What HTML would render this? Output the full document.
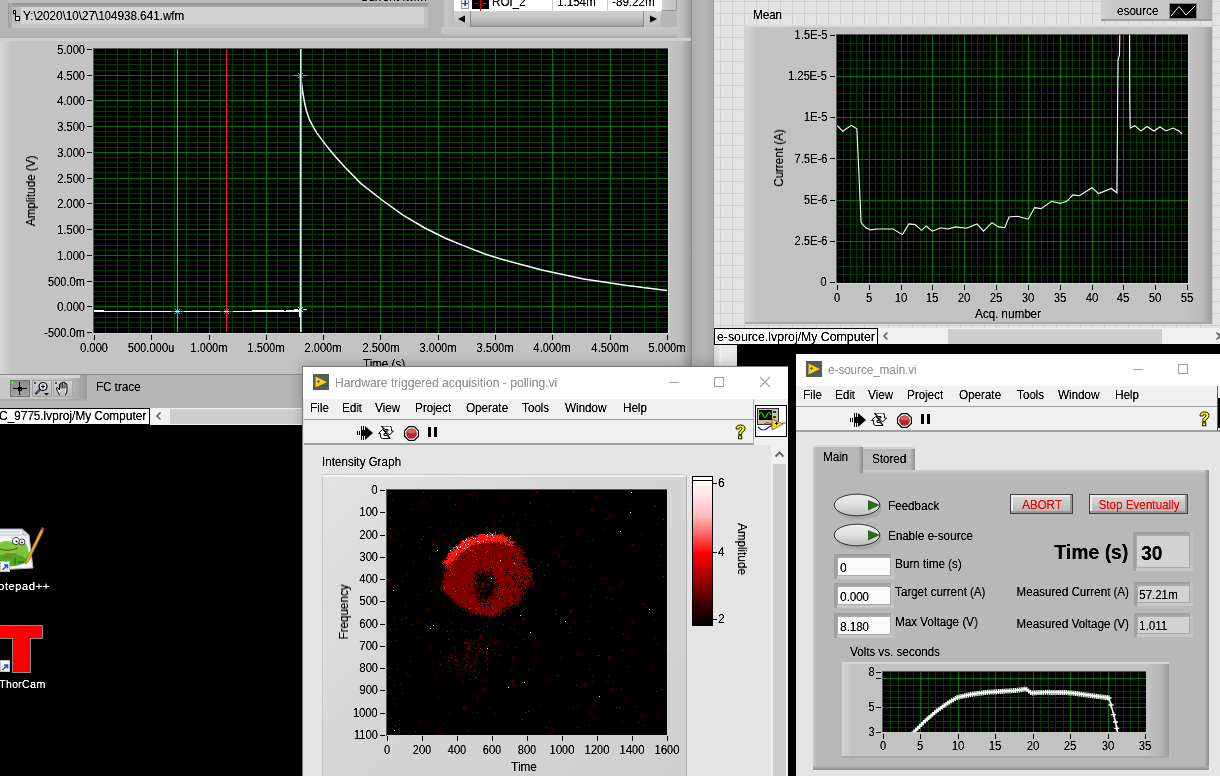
<!DOCTYPE html>
<html><head><meta charset="utf-8">
<style>
*{box-sizing:border-box;margin:0;padding:0}
html,body{width:1220px;height:776px;overflow:hidden;background:#000;font-family:"Liberation Sans",sans-serif;font-size:12px;color:#000;position:relative}
.a{position:absolute}
.t{position:absolute;white-space:nowrap;line-height:14px;height:14px;will-change:transform;filter:url(#crisp)}
svg{position:absolute;display:block}
</style></head><body>
<svg width="0" height="0" style="position:absolute;left:0;top:0"><filter id="crisp" x="-5%" y="-20%" width="110%" height="140%"><feComponentTransfer><feFuncA type="linear" slope="2.0" intercept="-0.3"/></feComponentTransfer></filter></svg>
<div class="a" style="left:0px;top:0px;width:737px;height:424px;background:#b4b4b4"></div>
<div class="a" style="left:8px;top:0px;width:420px;height:3px;background:#bcbcbc"></div>
<div class="a" style="left:360px;top:0;width:70px;height:2px;overflow:hidden">
<div class="a" style="left:0px;top:-10.5px;width:0;height:14px;"><div class="t" style="left:0;top:0;font-size:12px;color:#000;transform:scaleX(0.97);transform-origin:0 50%;">Current .wfm</div></div>
</div>
<div class="a" style="left:8px;top:3px;width:420px;height:25px;background:#b8b8b8"></div>
<div class="a" style="left:8px;top:3px;width:420px;height:4px;background:linear-gradient(#929292,#aaaaaa)"></div>
<div class="a" style="left:8px;top:3px;width:4px;height:25px;background:linear-gradient(90deg,#9c9c9c,#b0b0b0)"></div>
<div class="a" style="left:12px;top:24px;width:416px;height:4px;background:#c2c2c2"></div>
<div class="a" style="left:424px;top:7px;width:4px;height:21px;background:#c0c0c0"></div>
<div class="a" style="left:12px;top:7px;width:412px;height:17px;background:#d4d4d4"></div>
<div class="a" style="left:12px;top:7px;width:9px;height:17px;background:#bdbdbd"></div>
<svg style="left:13px;top:10px" width="7" height="11" viewBox="0 0 7 11" shape-rendering="crispEdges"><rect x="0" y="0" width="3" height="4" fill="#000"/><rect x="1" y="1" width="1" height="2" fill="#fff"/><rect x="2" y="4" width="1" height="2" fill="#000"/><rect x="2" y="6" width="5" height="5" fill="#000"/><rect x="3" y="7" width="3" height="3" fill="#fff"/></svg>
<div class="a" style="left:23px;top:9px;width:0;height:14px;"><div class="t" style="left:0;top:0;font-size:12px;color:#000;transform:scaleX(0.97);transform-origin:0 50%;">Y:\2020\10\27\104938.641.wfm</div></div>
<div class="a" style="left:441px;top:0px;width:250px;height:38px;background:#bababa"></div>
<div class="a" style="left:441px;top:0px;width:13px;height:38px;background:linear-gradient(90deg,#b0b0b0,#c6c6c6 40%,#bcbcbc)"></div>
<div class="a" style="left:441px;top:27px;width:250px;height:11px;background:linear-gradient(#c8c8c8,#c4c4c4 30%,#bdbdbd 70%,#a9a9a9)"></div>
<div class="a" style="left:677px;top:0px;width:14px;height:38px;background:linear-gradient(90deg,#c4c4c4,#b8b8b8 50%,#9f9f9f)"></div>
<div class="a" style="left:454px;top:0px;width:208px;height:11px;background:#fff"></div>
<div class="a" style="left:552px;top:0px;width:1px;height:11px;background:#c8c8c8"></div>
<div class="a" style="left:607px;top:0px;width:1px;height:11px;background:#c8c8c8"></div>
<div class="a" style="left:461px;top:0px;width:8px;height:9px;background:#f4f4f4;border:1px solid #9a9a9a;border-top:none"></div>
<div class="a" style="left:465px;top:-4px;width:0;height:14px;"><div class="t" style="left:0;top:0;font-size:11px;color:#2a4fa0;transform:translateX(-50%) scaleX(0.97);transform-origin:50% 50%;font-weight:bold">+</div></div>
<div class="a" style="left:472px;top:0px;width:17px;height:9px;background:#000"></div>
<svg style="left:472px;top:0px" width="17" height="11" viewBox="0 0 17 11" shape-rendering="crispEdges"><rect x="8" y="0" width="1" height="11" fill="#e00"/><rect x="3" y="3" width="3" height="1" fill="#e00"/><rect x="11" y="3" width="3" height="1" fill="#e00"/><rect x="6" y="1" width="1" height="1" fill="#e00"/><rect x="10" y="1" width="1" height="1" fill="#e00"/><rect x="6" y="5" width="1" height="1" fill="#e00"/><rect x="10" y="5" width="1" height="1" fill="#e00"/></svg>
<div class="a" style="left:492px;top:-5px;width:0;height:14px;"><div class="t" style="left:0;top:0;font-size:12px;color:#000;transform:scaleX(0.97);transform-origin:0 50%;">ROI_2</div></div>
<div class="a" style="left:557px;top:-5px;width:0;height:14px;"><div class="t" style="left:0;top:0;font-size:12px;color:#000;transform:scaleX(0.97);transform-origin:0 50%;">1.154m</div></div>
<div class="a" style="left:612px;top:-5px;width:0;height:14px;"><div class="t" style="left:0;top:0;font-size:12px;color:#000;transform:scaleX(0.97);transform-origin:0 50%;">-89.22m</div></div>
<div class="a" style="left:662px;top:0px;width:15px;height:11px;background:linear-gradient(90deg,#d0d0d0,#c2c2c2);border-right:1px solid #999;border-bottom:1px solid #999"></div>
<div class="a" style="left:454px;top:11px;width:223px;height:16px;background:#b9b9b9"></div>
<div class="a" style="left:454px;top:11px;width:17px;height:16px;background:linear-gradient(#d2d2d2,#bdbdbd);border-right:1px solid #888"></div>
<svg style="left:457px;top:14px" width="10" height="10" viewBox="0 0 10 10"><path d="M1 5 L8 1.5 L8 8.5 Z" fill="#000"/></svg>
<div class="a" style="left:471px;top:11px;width:172px;height:16px;background:linear-gradient(#cfcfcf,#c8c8c8 30%,#a9a9a9 85%,#8d8d8d)"></div>
<div class="a" style="left:643px;top:11px;width:18px;height:16px;background:linear-gradient(#d2d2d2,#bdbdbd);border-left:1px solid #888"></div>
<svg style="left:648px;top:14px" width="10" height="10" viewBox="0 0 10 10"><path d="M9 5 L2 1.5 L2 8.5 Z" fill="#000"/></svg>
<div class="a" style="left:661px;top:11px;width:16px;height:16px;background:#b6b6b6"></div>
<div class="a" style="left:0px;top:38px;width:691px;height:3px;background:#d0d0d0"></div>
<div class="a" style="left:0px;top:41px;width:691px;height:333px;background:#c3c3c3"></div>
<div class="a" style="left:0px;top:41px;width:10px;height:333px;background:linear-gradient(90deg,#d8d8d8,#cecece 60%,#c3c3c3)"></div>
<div class="a" style="left:668px;top:41px;width:23px;height:333px;background:linear-gradient(90deg,#c3c3c3,#bdbdbd 55%,#9a9a9a)"></div>
<div class="a" style="left:691px;top:0px;width:1px;height:374px;background:#8e8e8e"></div>
<div class="a" style="left:692px;top:0px;width:22px;height:366px;background:linear-gradient(90deg,#adadad,#b6b6b6 50%,#ababab)"></div>
<div class="a" style="left:713px;top:0px;width:1px;height:366px;background:#9c9c9c"></div>
<svg style="left:94px;top:49px" width="574" height="284" viewBox="0 0 574 284">
<rect width="574" height="284" fill="#000"/>
<g shape-rendering="crispEdges">
<path d="M11 0h1v284h-1zM23 0h1v284h-1zM34 0h1v284h-1zM46 0h1v284h-1zM69 0h1v284h-1zM80 0h1v284h-1zM92 0h1v284h-1zM103 0h1v284h-1zM126 0h1v284h-1zM138 0h1v284h-1zM149 0h1v284h-1zM160 0h1v284h-1zM183 0h1v284h-1zM195 0h1v284h-1zM206 0h1v284h-1zM218 0h1v284h-1zM241 0h1v284h-1zM252 0h1v284h-1zM264 0h1v284h-1zM275 0h1v284h-1zM298 0h1v284h-1zM309 0h1v284h-1zM321 0h1v284h-1zM332 0h1v284h-1zM355 0h1v284h-1zM367 0h1v284h-1zM378 0h1v284h-1zM390 0h1v284h-1zM413 0h1v284h-1zM424 0h1v284h-1zM435 0h1v284h-1zM447 0h1v284h-1zM470 0h1v284h-1zM481 0h1v284h-1zM493 0h1v284h-1zM504 0h1v284h-1zM527 0h1v284h-1zM539 0h1v284h-1zM550 0h1v284h-1zM562 0h1v284h-1zM0 5h574v1h-574zM0 10h574v1h-574zM0 15h574v1h-574zM0 21h574v1h-574zM0 31h574v1h-574zM0 36h574v1h-574zM0 41h574v1h-574zM0 46h574v1h-574zM0 57h574v1h-574zM0 62h574v1h-574zM0 67h574v1h-574zM0 72h574v1h-574zM0 82h574v1h-574zM0 87h574v1h-574zM0 93h574v1h-574zM0 98h574v1h-574zM0 108h574v1h-574zM0 113h574v1h-574zM0 118h574v1h-574zM0 123h574v1h-574zM0 134h574v1h-574zM0 139h574v1h-574zM0 144h574v1h-574zM0 149h574v1h-574zM0 160h574v1h-574zM0 165h574v1h-574zM0 170h574v1h-574zM0 175h574v1h-574zM0 185h574v1h-574zM0 190h574v1h-574zM0 196h574v1h-574zM0 201h574v1h-574zM0 211h574v1h-574zM0 216h574v1h-574zM0 221h574v1h-574zM0 226h574v1h-574zM0 237h574v1h-574zM0 242h574v1h-574zM0 247h574v1h-574zM0 252h574v1h-574zM0 262h574v1h-574zM0 268h574v1h-574zM0 273h574v1h-574zM0 278h574v1h-574z" fill="#003c00"/>
<path d="M57 0h1v284h-1zM115 0h1v284h-1zM172 0h1v284h-1zM229 0h1v284h-1zM286 0h1v284h-1zM344 0h1v284h-1zM401 0h1v284h-1zM458 0h1v284h-1zM516 0h1v284h-1zM0 26h574v1h-574zM0 51h574v1h-574zM0 77h574v1h-574zM0 103h574v1h-574zM0 129h574v1h-574zM0 154h574v1h-574zM0 180h574v1h-574zM0 206h574v1h-574zM0 232h574v1h-574zM0 257h574v1h-574z" fill="#007400"/>
</g>
<rect x="83" y="0" width="1" height="283" fill="#2ab4e6" shape-rendering="crispEdges"/><rect x="132" y="0" width="1" height="283" fill="#ff2020" shape-rendering="crispEdges"/><g shape-rendering="crispEdges" fill="#fff"><rect x="0" y="262" width="205" height="1"/><rect x="0" y="261" width="10" height="1"/><rect x="158" y="261" width="32" height="1"/><rect x="192" y="261" width="13" height="1"/><rect x="205" y="260" width="1" height="8"/></g><polyline points="206.5,260.0 206.5,26.0 208.1,39.0 209.4,46.8 210.7,54.5 212.6,62.2 215.2,70.0 218.4,76.4 222.9,84.1 228.7,91.9 235.8,100.9 243.5,109.9 251.0,118.3 267.0,134.6 288.0,151.0 309.0,166.1 329.9,178.5 350.9,189.0 371.9,197.6 390.3,204.8 406.0,209.8 447.8,221.0 489.6,230.0 531.3,236.3 573.1,241.4" fill="none" stroke="#fff" stroke-width="1.5"/><rect x="206" y="0" width="1" height="283" fill="#c8ffff" shape-rendering="crispEdges"/><rect x="207" y="0" width="1" height="283" fill="#ff5a9a" shape-rendering="crispEdges"/><path d="M204 24h1v1h-1zM205 25h1v1h-1zM207 25h1v1h-1zM208 24h1v1h-1zM204 28h1v1h-1zM205 27h1v1h-1zM207 27h1v1h-1zM208 28h1v1h-1zM200 26h4v1h-4zM209 26h4v1h-4z" fill="#ff70b0" shape-rendering="crispEdges"/><path d="M81 260h1v1h-1zM82 261h1v1h-1zM84 261h1v1h-1zM85 260h1v1h-1zM81 264h1v1h-1zM82 263h1v1h-1zM84 263h1v1h-1zM85 264h1v1h-1zM77 262h4v1h-4zM86 262h4v1h-4z" fill="#2ab4e6" shape-rendering="crispEdges"/><path d="M130 260h1v1h-1zM131 261h1v1h-1zM133 261h1v1h-1zM134 260h1v1h-1zM130 264h1v1h-1zM131 263h1v1h-1zM133 263h1v1h-1zM134 264h1v1h-1zM126 262h4v1h-4zM135 262h4v1h-4z" fill="#ff3030" shape-rendering="crispEdges"/><path d="M204 258h1v1h-1zM205 259h1v1h-1zM207 259h1v1h-1zM208 258h1v1h-1zM204 262h1v1h-1zM205 261h1v1h-1zM207 261h1v1h-1zM208 262h1v1h-1zM200 260h4v1h-4zM209 260h4v1h-4z" fill="#c0ffff" shape-rendering="crispEdges"/>
</svg>
<div class="a" style="left:93px;top:48px;width:575px;height:1px;background:#555"></div>
<div class="a" style="left:93px;top:48px;width:1px;height:285px;background:#555"></div>
<div class="a" style="left:93px;top:333px;width:576px;height:1px;background:#d4d4d4"></div>
<div class="a" style="left:668px;top:48px;width:1px;height:286px;background:#d4d4d4"></div>
<div class="a" style="left:85px;top:43.0px;width:0;height:14px;"><div class="t" style="right:0;top:0;font-size:12px;color:#000;transform:scaleX(0.93);transform-origin:100% 50%;">5.000</div></div>
<div class="a" style="left:87px;top:49px;width:5px;height:1px;background:#000"></div>
<div class="a" style="left:85px;top:68.72727272727272px;width:0;height:14px;"><div class="t" style="right:0;top:0;font-size:12px;color:#000;transform:scaleX(0.93);transform-origin:100% 50%;">4.500</div></div>
<div class="a" style="left:87px;top:75px;width:5px;height:1px;background:#000"></div>
<div class="a" style="left:85px;top:94.45454545454545px;width:0;height:14px;"><div class="t" style="right:0;top:0;font-size:12px;color:#000;transform:scaleX(0.93);transform-origin:100% 50%;">4.000</div></div>
<div class="a" style="left:87px;top:100px;width:5px;height:1px;background:#000"></div>
<div class="a" style="left:85px;top:120.18181818181819px;width:0;height:14px;"><div class="t" style="right:0;top:0;font-size:12px;color:#000;transform:scaleX(0.93);transform-origin:100% 50%;">3.500</div></div>
<div class="a" style="left:87px;top:126px;width:5px;height:1px;background:#000"></div>
<div class="a" style="left:85px;top:145.9090909090909px;width:0;height:14px;"><div class="t" style="right:0;top:0;font-size:12px;color:#000;transform:scaleX(0.93);transform-origin:100% 50%;">3.000</div></div>
<div class="a" style="left:87px;top:152px;width:5px;height:1px;background:#000"></div>
<div class="a" style="left:85px;top:171.63636363636363px;width:0;height:14px;"><div class="t" style="right:0;top:0;font-size:12px;color:#000;transform:scaleX(0.93);transform-origin:100% 50%;">2.500</div></div>
<div class="a" style="left:87px;top:178px;width:5px;height:1px;background:#000"></div>
<div class="a" style="left:85px;top:197.36363636363637px;width:0;height:14px;"><div class="t" style="right:0;top:0;font-size:12px;color:#000;transform:scaleX(0.93);transform-origin:100% 50%;">2.000</div></div>
<div class="a" style="left:87px;top:203px;width:5px;height:1px;background:#000"></div>
<div class="a" style="left:85px;top:223.0909090909091px;width:0;height:14px;"><div class="t" style="right:0;top:0;font-size:12px;color:#000;transform:scaleX(0.93);transform-origin:100% 50%;">1.500</div></div>
<div class="a" style="left:87px;top:229px;width:5px;height:1px;background:#000"></div>
<div class="a" style="left:85px;top:248.8181818181818px;width:0;height:14px;"><div class="t" style="right:0;top:0;font-size:12px;color:#000;transform:scaleX(0.93);transform-origin:100% 50%;">1.000</div></div>
<div class="a" style="left:87px;top:255px;width:5px;height:1px;background:#000"></div>
<div class="a" style="left:85px;top:274.5454545454545px;width:0;height:14px;"><div class="t" style="right:0;top:0;font-size:12px;color:#000;transform:scaleX(0.93);transform-origin:100% 50%;">500.0m</div></div>
<div class="a" style="left:87px;top:281px;width:5px;height:1px;background:#000"></div>
<div class="a" style="left:85px;top:300.27272727272725px;width:0;height:14px;"><div class="t" style="right:0;top:0;font-size:12px;color:#000;transform:scaleX(0.93);transform-origin:100% 50%;">0.000</div></div>
<div class="a" style="left:87px;top:306px;width:5px;height:1px;background:#000"></div>
<div class="a" style="left:85px;top:326.0px;width:0;height:14px;"><div class="t" style="right:0;top:0;font-size:12px;color:#000;transform:scaleX(0.93);transform-origin:100% 50%;">-500.0m</div></div>
<div class="a" style="left:87px;top:332px;width:5px;height:1px;background:#000"></div>
<div class="a" style="left:94.0px;top:341px;width:0;height:14px;"><div class="t" style="left:0;top:0;font-size:12px;color:#000;transform:translateX(-50%) scaleX(0.93);transform-origin:50% 50%;">0.000</div></div>
<div class="a" style="left:94px;top:335px;width:1px;height:5px;background:#000"></div>
<div class="a" style="left:151.3px;top:341px;width:0;height:14px;"><div class="t" style="left:0;top:0;font-size:12px;color:#000;transform:translateX(-50%) scaleX(0.93);transform-origin:50% 50%;">500.000u</div></div>
<div class="a" style="left:151px;top:335px;width:1px;height:5px;background:#000"></div>
<div class="a" style="left:208.6px;top:341px;width:0;height:14px;"><div class="t" style="left:0;top:0;font-size:12px;color:#000;transform:translateX(-50%) scaleX(0.93);transform-origin:50% 50%;">1.000m</div></div>
<div class="a" style="left:209px;top:335px;width:1px;height:5px;background:#000"></div>
<div class="a" style="left:265.9px;top:341px;width:0;height:14px;"><div class="t" style="left:0;top:0;font-size:12px;color:#000;transform:translateX(-50%) scaleX(0.93);transform-origin:50% 50%;">1.500m</div></div>
<div class="a" style="left:266px;top:335px;width:1px;height:5px;background:#000"></div>
<div class="a" style="left:323.2px;top:341px;width:0;height:14px;"><div class="t" style="left:0;top:0;font-size:12px;color:#000;transform:translateX(-50%) scaleX(0.93);transform-origin:50% 50%;">2.000m</div></div>
<div class="a" style="left:323px;top:335px;width:1px;height:5px;background:#000"></div>
<div class="a" style="left:380.5px;top:341px;width:0;height:14px;"><div class="t" style="left:0;top:0;font-size:12px;color:#000;transform:translateX(-50%) scaleX(0.93);transform-origin:50% 50%;">2.500m</div></div>
<div class="a" style="left:380px;top:335px;width:1px;height:5px;background:#000"></div>
<div class="a" style="left:437.8px;top:341px;width:0;height:14px;"><div class="t" style="left:0;top:0;font-size:12px;color:#000;transform:translateX(-50%) scaleX(0.93);transform-origin:50% 50%;">3.000m</div></div>
<div class="a" style="left:438px;top:335px;width:1px;height:5px;background:#000"></div>
<div class="a" style="left:495.1px;top:341px;width:0;height:14px;"><div class="t" style="left:0;top:0;font-size:12px;color:#000;transform:translateX(-50%) scaleX(0.93);transform-origin:50% 50%;">3.500m</div></div>
<div class="a" style="left:495px;top:335px;width:1px;height:5px;background:#000"></div>
<div class="a" style="left:552.4px;top:341px;width:0;height:14px;"><div class="t" style="left:0;top:0;font-size:12px;color:#000;transform:translateX(-50%) scaleX(0.93);transform-origin:50% 50%;">4.000m</div></div>
<div class="a" style="left:552px;top:335px;width:1px;height:5px;background:#000"></div>
<div class="a" style="left:609.7px;top:341px;width:0;height:14px;"><div class="t" style="left:0;top:0;font-size:12px;color:#000;transform:translateX(-50%) scaleX(0.93);transform-origin:50% 50%;">4.500m</div></div>
<div class="a" style="left:610px;top:335px;width:1px;height:5px;background:#000"></div>
<div class="a" style="left:667.0px;top:341px;width:0;height:14px;"><div class="t" style="left:0;top:0;font-size:12px;color:#000;transform:translateX(-50%) scaleX(0.93);transform-origin:50% 50%;">5.000m</div></div>
<div class="a" style="left:667px;top:335px;width:1px;height:5px;background:#000"></div>
<div class="a" style="left:31px;top:184px;width:0;height:14px;"><div class="t" style="left:0;top:0;font-size:12px;color:#000;transform:translateX(-50%) rotate(-90deg) scaleX(0.97);transform-origin:50% 50%;">Amplitude (V)</div></div>
<div class="a" style="left:384px;top:357px;width:0;height:14px;"><div class="t" style="left:0;top:0;font-size:12px;color:#000;transform:translateX(-50%) scaleX(0.97);transform-origin:50% 50%;">Time (s)</div></div>
<div class="a" style="left:0px;top:374px;width:691px;height:1px;background:#8a8a8a"></div>
<div class="a" style="left:0px;top:375px;width:87px;height:26px;background:linear-gradient(90deg,#c8c8c8,#c2c2c2 75%,#9a9a9a)"></div>
<div class="a" style="left:0px;top:375px;width:80px;height:3px;background:#d2d2d2"></div>
<div class="a" style="left:0px;top:399px;width:87px;height:2px;background:#a8a8a8"></div>
<div class="a" style="left:10px;top:380px;width:20px;height:17px;background:linear-gradient(#8a8a8a,#a4a4a4);border:1px solid #707070"></div>
<svg style="left:10px;top:380px" width="20" height="17" viewBox="0 0 20 17" shape-rendering="crispEdges"><rect x="9" y="2" width="1" height="13" fill="#000"/><rect x="3" y="8" width="14" height="1" fill="#000"/><rect x="8" y="7" width="3" height="3" fill="none" stroke="#000" stroke-width="1"/><rect x="2" y="1" width="1" height="3" fill="#3f3"/><rect x="1" y="2" width="3" height="1" fill="#3f3"/></svg>
<div class="a" style="left:32px;top:380px;width:20px;height:17px;background:linear-gradient(#d0d0d0,#b8b8b8);border:1px solid #a0a0a0"></div>
<svg style="left:32px;top:380px" width="20" height="17" viewBox="0 0 20 17"><circle cx="11" cy="6.5" r="4" fill="#e8e8ff" stroke="#000" stroke-width="1.2"/><path d="M9 6.5h4M11 4.5v4" stroke="#000" stroke-width="1.2"/><path d="M8 9.5 L3.5 14" stroke="#000" stroke-width="2.2"/><path d="M7.5 10 L4 13.5" stroke="#ddd" stroke-width="0.8"/><path d="M12 13h5l-2.5 2.5z" fill="#000"/><rect x="2" y="2" width="2" height="2" fill="#3a6a3a"/></svg>
<div class="a" style="left:53px;top:380px;width:20px;height:17px;background:linear-gradient(#d0d0d0,#bcbcbc);border:1px solid #a8a8a8"></div>
<svg style="left:53px;top:380px" width="20" height="17" viewBox="0 0 20 17"><path d="M6.5 15 Q4 11 3.5 8.5 Q3.5 7 5 8 L6.5 10 L6.5 4 Q7 3 8 4 L8 8 M8 3.5 Q8.5 2 9.5 2.5 L10 8 M10 2.5 Q11 1.5 12 2.5 L12 8 M12 3.5 Q13 3 13.8 4 L14 9 Q14.5 12 12.5 15" fill="#f4f4f4" stroke="#000" stroke-width="1" stroke-linecap="round"/><rect x="2" y="2" width="2" height="2" fill="#3a6a3a"/></svg>
<div class="a" style="left:96px;top:380px;width:0;height:14px;"><div class="t" style="left:0;top:0;font-size:12px;color:#000;transform:scaleX(0.97);transform-origin:0 50%;">FC trace</div></div>
<div class="a" style="left:0px;top:408px;width:303px;height:17px;background:#f0f0f0"></div>
<div class="a" style="left:170px;top:409px;width:133px;height:15px;background:#cdcdcd"></div>
<div class="a" style="left:-2px;top:408px;width:152px;height:17px;background:#fff;border:1px solid #000"></div>
<div class="a" style="left:-1px;top:409px;width:0;height:14px;"><div class="t" style="left:0;top:0;font-size:12px;color:#000;transform:scaleX(0.985);transform-origin:0 50%;">C_9775.lvproj/My Computer</div></div>
<svg style="left:154px;top:411px" width="10" height="10" viewBox="0 0 10 10"><path d="M6.5 1.5 L3 5 L6.5 8.5" fill="none" stroke="#606060" stroke-width="1.6"/></svg>
<div class="a" style="left:714px;top:0px;width:506px;height:328px;background-color:#e3e3e3;background-image:linear-gradient(90deg,#cfcfcf 1px,transparent 1px),linear-gradient(#cfcfcf 1px,transparent 1px);background-size:12px 12px;background-position:6px 1px"></div>
<div class="a" style="left:714px;top:344px;width:23px;height:22px;background:linear-gradient(90deg,#d8d8d8,#ececec 30%,#e6e6e6)"></div>
<div class="a" style="left:720px;top:344px;width:1px;height:22px;background:#f4f4f4"></div>
<div class="a" style="left:753px;top:8px;width:0;height:14px;"><div class="t" style="left:0;top:0;font-size:12px;color:#000;transform:scaleX(0.97);transform-origin:0 50%;">Mean</div></div>
<div class="a" style="left:1101px;top:0px;width:111px;height:21px;background:linear-gradient(90deg,#cfcfcf,#c6c6c6 15%,#c4c4c4 80%,#a8a8a8)"></div>
<div class="a" style="left:1101px;top:19px;width:111px;height:2px;background:#a0a0a0"></div>
<div class="a" style="left:1113px;top:0px;width:56px;height:19px;background:#c8c8c8"></div>
<div class="a" style="left:1117px;top:4px;width:0;height:14px;"><div class="t" style="left:0;top:0;font-size:12px;color:#000;transform:scaleX(0.97);transform-origin:0 50%;">esource</div></div>
<div class="a" style="left:1169px;top:3px;width:28px;height:16px;background:#000;border:1px solid #888"></div>
<svg style="left:1169px;top:3px" width="28" height="16" viewBox="0 0 28 16"><polyline points="2,13 10,3.5 17,12 26,3" fill="none" stroke="#fff" stroke-width="1"/></svg>
<div class="a" style="left:745px;top:25px;width:467px;height:299px;background:#c2c2c2"></div>
<div class="a" style="left:745px;top:25px;width:467px;height:2px;background:#d8d8d8"></div>
<div class="a" style="left:745px;top:27px;width:12px;height:297px;background:linear-gradient(90deg,#d2d2d2,#cbcbcb 50%,#c2c2c2)"></div>
<div class="a" style="left:1188px;top:27px;width:24px;height:297px;background:linear-gradient(90deg,#c2c2c2,#bababa 60%,#9c9c9c)"></div>
<div class="a" style="left:745px;top:322px;width:467px;height:2px;background:#a6a6a6"></div>
<svg style="left:837px;top:35px" width="351" height="248" viewBox="0 0 351 248">
<rect width="351" height="248" fill="#000"/>
<g shape-rendering="crispEdges">
<path d="M6 0h1v248h-1zM13 0h1v248h-1zM19 0h1v248h-1zM25 0h1v248h-1zM38 0h1v248h-1zM45 0h1v248h-1zM51 0h1v248h-1zM57 0h1v248h-1zM70 0h1v248h-1zM76 0h1v248h-1zM83 0h1v248h-1zM89 0h1v248h-1zM102 0h1v248h-1zM108 0h1v248h-1zM115 0h1v248h-1zM121 0h1v248h-1zM134 0h1v248h-1zM140 0h1v248h-1zM146 0h1v248h-1zM153 0h1v248h-1zM165 0h1v248h-1zM172 0h1v248h-1zM178 0h1v248h-1zM185 0h1v248h-1zM197 0h1v248h-1zM204 0h1v248h-1zM210 0h1v248h-1zM216 0h1v248h-1zM229 0h1v248h-1zM235 0h1v248h-1zM242 0h1v248h-1zM248 0h1v248h-1zM261 0h1v248h-1zM267 0h1v248h-1zM274 0h1v248h-1zM280 0h1v248h-1zM293 0h1v248h-1zM299 0h1v248h-1zM305 0h1v248h-1zM312 0h1v248h-1zM325 0h1v248h-1zM331 0h1v248h-1zM337 0h1v248h-1zM344 0h1v248h-1zM0 8h351v1h-351zM0 16h351v1h-351zM0 25h351v1h-351zM0 33h351v1h-351zM0 49h351v1h-351zM0 58h351v1h-351zM0 66h351v1h-351zM0 74h351v1h-351zM0 91h351v1h-351zM0 99h351v1h-351zM0 107h351v1h-351zM0 115h351v1h-351zM0 132h351v1h-351zM0 140h351v1h-351zM0 148h351v1h-351zM0 156h351v1h-351zM0 173h351v1h-351zM0 181h351v1h-351zM0 189h351v1h-351zM0 198h351v1h-351zM0 214h351v1h-351zM0 222h351v1h-351zM0 231h351v1h-351zM0 239h351v1h-351z" fill="#003c00"/>
<path d="M32 0h1v248h-1zM64 0h1v248h-1zM95 0h1v248h-1zM127 0h1v248h-1zM159 0h1v248h-1zM191 0h1v248h-1zM223 0h1v248h-1zM255 0h1v248h-1zM286 0h1v248h-1zM318 0h1v248h-1zM0 41h351v1h-351zM0 82h351v1h-351zM0 124h351v1h-351zM0 165h351v1h-351zM0 206h351v1h-351z" fill="#007400"/>
</g>
<polyline points="0.3,90.7 5.8,96.3 14.3,90.3 19.9,93.7 24.1,187.6 29.0,193.0 33.5,194.9 40.0,194.0 48.0,194.0 56.0,194.0 65.5,199.6 71.9,188.9 78.0,189.5 84.7,195.3 89.0,191.0 95.3,196.2 103.8,192.7 111.0,194.0 118.8,191.9 129.4,193.2 140.0,188.9 146.5,196.2 155.0,187.6 161.4,191.9 167.8,192.7 172.0,182.0 180.6,181.2 191.2,184.2 197.6,172.7 204.0,173.6 214.7,166.3 223.2,168.4 229.6,166.3 236.0,159.9 242.4,160.8 255.0,152.7 261.6,158.6 274.3,153.5 279.9,157.8 281.0,25.0 282.5,20.0 283.0,-15.0 292.5,-15.0 292.7,61.0 293.2,93.0 297.8,90.7 304.0,96.0 310.0,91.5 317.0,96.0 323.0,92.0 329.0,96.0 336.0,93.0 342.0,96.0 345.0,99.0" fill="none" stroke="#fff" stroke-width="1.1"/>
</svg>
<div class="a" style="left:836px;top:34px;width:353px;height:1px;background:#555"></div>
<div class="a" style="left:836px;top:34px;width:1px;height:249px;background:#555"></div>
<div class="a" style="left:836px;top:283px;width:353px;height:1px;background:#d4d4d4"></div>
<div class="a" style="left:1188px;top:34px;width:1px;height:250px;background:#d4d4d4"></div>
<div class="a" style="left:827px;top:28.0px;width:0;height:14px;"><div class="t" style="right:0;top:0;font-size:12px;color:#000;transform:scaleX(0.93);transform-origin:100% 50%;">1.5E-5</div></div>
<div class="a" style="left:830px;top:35px;width:5px;height:1px;background:#000"></div>
<div class="a" style="left:827px;top:69.16666666666666px;width:0;height:14px;"><div class="t" style="right:0;top:0;font-size:12px;color:#000;transform:scaleX(0.93);transform-origin:100% 50%;">1.25E-5</div></div>
<div class="a" style="left:830px;top:76px;width:5px;height:1px;background:#000"></div>
<div class="a" style="left:827px;top:110.33333333333333px;width:0;height:14px;"><div class="t" style="right:0;top:0;font-size:12px;color:#000;transform:scaleX(0.93);transform-origin:100% 50%;">1E-5</div></div>
<div class="a" style="left:830px;top:117px;width:5px;height:1px;background:#000"></div>
<div class="a" style="left:827px;top:151.5px;width:0;height:14px;"><div class="t" style="right:0;top:0;font-size:12px;color:#000;transform:scaleX(0.93);transform-origin:100% 50%;">7.5E-6</div></div>
<div class="a" style="left:830px;top:158px;width:5px;height:1px;background:#000"></div>
<div class="a" style="left:827px;top:192.66666666666666px;width:0;height:14px;"><div class="t" style="right:0;top:0;font-size:12px;color:#000;transform:scaleX(0.93);transform-origin:100% 50%;">5E-6</div></div>
<div class="a" style="left:830px;top:200px;width:5px;height:1px;background:#000"></div>
<div class="a" style="left:827px;top:233.83333333333334px;width:0;height:14px;"><div class="t" style="right:0;top:0;font-size:12px;color:#000;transform:scaleX(0.93);transform-origin:100% 50%;">2.5E-6</div></div>
<div class="a" style="left:830px;top:241px;width:5px;height:1px;background:#000"></div>
<div class="a" style="left:827px;top:275.0px;width:0;height:14px;"><div class="t" style="right:0;top:0;font-size:12px;color:#000;transform:scaleX(0.93);transform-origin:100% 50%;">0</div></div>
<div class="a" style="left:830px;top:282px;width:5px;height:1px;background:#000"></div>
<div class="a" style="left:837.0px;top:291px;width:0;height:14px;"><div class="t" style="left:0;top:0;font-size:12px;color:#000;transform:translateX(-50%) scaleX(0.93);transform-origin:50% 50%;">0</div></div>
<div class="a" style="left:837px;top:285px;width:1px;height:5px;background:#000"></div>
<div class="a" style="left:868.8181818181819px;top:291px;width:0;height:14px;"><div class="t" style="left:0;top:0;font-size:12px;color:#000;transform:translateX(-50%) scaleX(0.93);transform-origin:50% 50%;">5</div></div>
<div class="a" style="left:869px;top:285px;width:1px;height:5px;background:#000"></div>
<div class="a" style="left:900.6363636363636px;top:291px;width:0;height:14px;"><div class="t" style="left:0;top:0;font-size:12px;color:#000;transform:translateX(-50%) scaleX(0.93);transform-origin:50% 50%;">10</div></div>
<div class="a" style="left:901px;top:285px;width:1px;height:5px;background:#000"></div>
<div class="a" style="left:932.4545454545455px;top:291px;width:0;height:14px;"><div class="t" style="left:0;top:0;font-size:12px;color:#000;transform:translateX(-50%) scaleX(0.93);transform-origin:50% 50%;">15</div></div>
<div class="a" style="left:932px;top:285px;width:1px;height:5px;background:#000"></div>
<div class="a" style="left:964.2727272727273px;top:291px;width:0;height:14px;"><div class="t" style="left:0;top:0;font-size:12px;color:#000;transform:translateX(-50%) scaleX(0.93);transform-origin:50% 50%;">20</div></div>
<div class="a" style="left:964px;top:285px;width:1px;height:5px;background:#000"></div>
<div class="a" style="left:996.0909090909091px;top:291px;width:0;height:14px;"><div class="t" style="left:0;top:0;font-size:12px;color:#000;transform:translateX(-50%) scaleX(0.93);transform-origin:50% 50%;">25</div></div>
<div class="a" style="left:996px;top:285px;width:1px;height:5px;background:#000"></div>
<div class="a" style="left:1027.909090909091px;top:291px;width:0;height:14px;"><div class="t" style="left:0;top:0;font-size:12px;color:#000;transform:translateX(-50%) scaleX(0.93);transform-origin:50% 50%;">30</div></div>
<div class="a" style="left:1028px;top:285px;width:1px;height:5px;background:#000"></div>
<div class="a" style="left:1059.7272727272727px;top:291px;width:0;height:14px;"><div class="t" style="left:0;top:0;font-size:12px;color:#000;transform:translateX(-50%) scaleX(0.93);transform-origin:50% 50%;">35</div></div>
<div class="a" style="left:1060px;top:285px;width:1px;height:5px;background:#000"></div>
<div class="a" style="left:1091.5454545454545px;top:291px;width:0;height:14px;"><div class="t" style="left:0;top:0;font-size:12px;color:#000;transform:translateX(-50%) scaleX(0.93);transform-origin:50% 50%;">40</div></div>
<div class="a" style="left:1092px;top:285px;width:1px;height:5px;background:#000"></div>
<div class="a" style="left:1123.3636363636365px;top:291px;width:0;height:14px;"><div class="t" style="left:0;top:0;font-size:12px;color:#000;transform:translateX(-50%) scaleX(0.93);transform-origin:50% 50%;">45</div></div>
<div class="a" style="left:1123px;top:285px;width:1px;height:5px;background:#000"></div>
<div class="a" style="left:1155.1818181818182px;top:291px;width:0;height:14px;"><div class="t" style="left:0;top:0;font-size:12px;color:#000;transform:translateX(-50%) scaleX(0.93);transform-origin:50% 50%;">50</div></div>
<div class="a" style="left:1155px;top:285px;width:1px;height:5px;background:#000"></div>
<div class="a" style="left:1187.0px;top:291px;width:0;height:14px;"><div class="t" style="left:0;top:0;font-size:12px;color:#000;transform:translateX(-50%) scaleX(0.93);transform-origin:50% 50%;">55</div></div>
<div class="a" style="left:1187px;top:285px;width:1px;height:5px;background:#000"></div>
<div class="a" style="left:1008px;top:307px;width:0;height:14px;"><div class="t" style="left:0;top:0;font-size:12px;color:#000;transform:translateX(-50%) scaleX(0.97);transform-origin:50% 50%;">Acq. number</div></div>
<div class="a" style="left:779px;top:151px;width:0;height:14px;"><div class="t" style="left:0;top:0;font-size:12px;color:#000;transform:translateX(-50%) rotate(-90deg) scaleX(0.97);transform-origin:50% 50%;">Current (A)</div></div>
<div class="a" style="left:714px;top:328px;width:506px;height:16px;background:#f0f0f0"></div>
<div class="a" style="left:948px;top:329px;width:214px;height:15px;background:#cdcdcd"></div>
<div class="a" style="left:714px;top:328px;width:164px;height:17px;background:#fff;border:1px solid #000"></div>
<div class="a" style="left:717px;top:330px;width:0;height:14px;"><div class="t" style="left:0;top:0;font-size:12.3px;color:#000;transform:scaleX(1.0);transform-origin:0 50%;">e-source.lvproj/My Computer</div></div>
<svg style="left:881px;top:331px" width="10" height="10" viewBox="0 0 10 10"><path d="M6.5 1.5 L3 5 L6.5 8.5" fill="none" stroke="#606060" stroke-width="1.6"/></svg>
<svg style="left:1213px;top:331px" width="10" height="10" viewBox="0 0 10 10"><path d="M3.5 1.5 L7 5 L3.5 8.5" fill="none" stroke="#606060" stroke-width="1.6"/></svg>
<svg style="left:0px;top:526px" width="46" height="48" viewBox="0 0 46 48"><path d="M-4 3 L22 3 L29 9 L33 42 L-4 44 Z" fill="#f4f4f8" stroke="#a8a8b8" stroke-width="1"/><path d="M22 3 L23 9 L29 9" fill="#d8d8e0" stroke="#a8a8b8" stroke-width="0.8"/><path d="M-4 6h24M-4 9h26" stroke="#a0b0d8" stroke-width="0.8"/><path d="M-4 20 Q2 13 12 16 Q20 12 26 18 Q31 26 27 34 Q20 41 8 40 L-4 40 Z" fill="#78c83c"/><path d="M-4 30 Q10 26 22 30 Q27 33 27 36 Q18 41 6 40 L-4 40 Z" fill="#4ea822"/><circle cx="16" cy="15" r="3.6" fill="#fff" stroke="#303030" stroke-width="0.9"/><circle cx="22" cy="16" r="3" fill="#fff" stroke="#303030" stroke-width="0.9"/><circle cx="16.5" cy="15.5" r="1" fill="#000"/><circle cx="22" cy="16.5" r="0.9" fill="#000"/><path d="M0 23 Q8 26 18 22" stroke="#7a3b1b" stroke-width="1" fill="none"/><path d="M5 28h12M3 31h8" stroke="#a05020" stroke-width="0.8"/><path d="M15 38 L15 32 M18 36h6" stroke="#1b4d1b" stroke-width="0.9"/><path d="M41 3 L26 34 L25.5 38 L28.5 35.5 L43.5 5 Z" fill="#f0a828" stroke="#6a4810" stroke-width="0.6"/><path d="M40.5 3.5 L42 1 L44.5 2.5 L43.5 5 Z" fill="#c04040"/></svg>
<svg style="left:0px;top:561px" width="10" height="11" viewBox="0 0 10 11"><rect width="10" height="11" fill="#fff"/><rect x="0.5" y="0.5" width="9" height="10" fill="none" stroke="#c0c0c0"/><path d="M2.5 9 L7 4.5 M4 4h3.5v3.5" stroke="#1c5bb8" stroke-width="1.7" fill="none"/></svg>
<div class="a" style="left:-2px;top:579px;width:0;height:14px;"><div class="t" style="left:0;top:0;font-size:11.5px;color:#fff;transform:scaleX(0.97);transform-origin:0 50%;letter-spacing:0.6px">otepad++</div></div>
<svg style="left:0px;top:624px" width="46" height="50" viewBox="0 0 46 50" shape-rendering="crispEdges"><path d="M-2 1.5 H42.5 V14.5 H30.5 V48.5 H12.5 V14.5 H-2 Z" fill="#ff0000" stroke="#8a8a8a" stroke-width="1"/></svg>
<svg style="left:0px;top:660px" width="10" height="12" viewBox="0 0 10 12"><rect width="10" height="12" fill="#fff"/><rect x="0.5" y="0.5" width="9" height="11" fill="none" stroke="#c0c0c0"/><path d="M2.5 10 L7 5.5 M4 5h3.5v3.5" stroke="#1c5bb8" stroke-width="1.7" fill="none"/></svg>
<div class="a" style="left:-1px;top:677px;width:0;height:14px;"><div class="t" style="left:0;top:0;font-size:11px;color:#fff;transform:scaleX(0.97);transform-origin:0 50%;letter-spacing:0.3px">ThorCam</div></div>
<div class="a" style="left:303px;top:366px;width:485px;height:410px;background:#e4e4e4;box-shadow:0 0 11px 2px rgba(0,0,0,0.22)"></div>
<div class="a" style="left:303px;top:366px;width:485px;height:33px;background:#fff"></div>
<div class="a" style="left:302px;top:366px;width:1px;height:410px;background:#7a7a7a"></div>
<div class="a" style="left:302px;top:366px;width:486px;height:1px;background:#7a7a7a"></div>
<svg style="left:313px;top:374px" width="16" height="16" viewBox="0 0 16 16" shape-rendering="crispEdges"><rect width="16" height="16" fill="#555a60"/><path d="M2.5 2.5 L14 8 L2.5 13.5 Z" fill="#fcd100" shape-rendering="geometricPrecision"/><rect x="4" y="7" width="3" height="1" fill="#5a6478"/><rect x="5" y="6" width="1" height="3" fill="#5a6478"/></svg>
<div class="a" style="left:335px;top:376px;width:0;height:14px;"><div class="t" style="left:0;top:0;font-size:12px;color:#9a9a9a;transform:scaleX(1.01);transform-origin:0 50%;">Hardware triggered acquisition - polling.vi</div></div>
<div class="a" style="left:669px;top:382px;width:10px;height:1px;background:#a0a0a0"></div>
<div class="a" style="left:714px;top:377px;width:10px;height:10px;border:1px solid #a0a0a0"></div>
<svg style="left:759px;top:376px" width="12" height="12" viewBox="0 0 12 12"><path d="M1 1 L11 11 M11 1 L1 11" stroke="#a0a0a0" stroke-width="1.1"/></svg>
<div class="a" style="left:304px;top:399px;width:484px;height:20px;background:#f0f0f0"></div>
<div class="a" style="left:310px;top:401px;width:0;height:14px;"><div class="t" style="left:0;top:0;font-size:12px;color:#000;transform:scaleX(0.97);transform-origin:0 50%;">File</div></div>
<div class="a" style="left:342px;top:401px;width:0;height:14px;"><div class="t" style="left:0;top:0;font-size:12px;color:#000;transform:scaleX(0.97);transform-origin:0 50%;">Edit</div></div>
<div class="a" style="left:375px;top:401px;width:0;height:14px;"><div class="t" style="left:0;top:0;font-size:12px;color:#000;transform:scaleX(0.97);transform-origin:0 50%;">View</div></div>
<div class="a" style="left:415px;top:401px;width:0;height:14px;"><div class="t" style="left:0;top:0;font-size:12px;color:#000;transform:scaleX(0.97);transform-origin:0 50%;">Project</div></div>
<div class="a" style="left:466px;top:401px;width:0;height:14px;"><div class="t" style="left:0;top:0;font-size:12px;color:#000;transform:scaleX(0.97);transform-origin:0 50%;">Operate</div></div>
<div class="a" style="left:522px;top:401px;width:0;height:14px;"><div class="t" style="left:0;top:0;font-size:12px;color:#000;transform:scaleX(0.97);transform-origin:0 50%;">Tools</div></div>
<div class="a" style="left:565px;top:401px;width:0;height:14px;"><div class="t" style="left:0;top:0;font-size:12px;color:#000;transform:scaleX(0.97);transform-origin:0 50%;">Window</div></div>
<div class="a" style="left:623px;top:401px;width:0;height:14px;"><div class="t" style="left:0;top:0;font-size:12px;color:#000;transform:scaleX(0.97);transform-origin:0 50%;">Help</div></div>
<div class="a" style="left:304px;top:419px;width:484px;height:1px;background:#a0a0a0"></div>
<div class="a" style="left:304px;top:420px;width:484px;height:24px;background:#f0f0f0"></div>
<div class="a" style="left:304px;top:443px;width:484px;height:2px;background:#a0a0a0"></div>
<svg style="left:357px;top:426px" width="84" height="15" viewBox="0 0 84 15"><g shape-rendering="crispEdges" fill="#000"><rect x="0" y="5" width="1" height="4"/><rect x="2" y="5" width="1" height="4"/><rect x="4" y="0" width="1" height="4"/><rect x="6" y="0" width="1" height="4"/><rect x="4" y="10" width="1" height="4"/><rect x="6" y="10" width="1" height="4"/><rect x="4" y="4" width="5" height="6"/></g><path d="M8 0 L16 7 L8 14 Z" fill="#000"/><g transform="translate(17,-3)" stroke="#000" stroke-width="1" fill="#fff" stroke-linejoin="miter"><path d="M7.5 3 H15.5 Q17.5 3 17.5 5.5 V8 H19.5 L15.5 12 L11.5 8 H14 V6.5 H11 Z"/><path d="M16 15.5 H8.5 Q6.5 15.5 6.5 13 V10.5 H4.5 L8.5 6.5 L12.5 10.5 H10 V12.5 H13 Z"/><path d="M7.5 3 L16 15.5" fill="none" stroke-width="1.1"/></g><g transform="translate(47,0)"><path d="M4.5 0 H10.5 L15 4.5 V10.5 L10.5 15 H4.5 L0 10.5 V4.5 Z" fill="#000"/><path d="M5 1.2 H10 L13.8 5 V10 L10 13.8 H5 L1.2 10 V5 Z" fill="#fff"/><circle cx="7.5" cy="7.5" r="5.3" fill="#b82525"/><ellipse cx="7.5" cy="5.3" rx="4" ry="2.4" fill="#d86060"/><rect x="2.3" y="7" width="10.4" height="1.3" fill="#c23232"/></g><g shape-rendering="crispEdges" fill="#000"><rect x="71" y="1" width="3" height="10"/><rect x="77" y="1" width="3" height="10"/></g></svg>
<svg style="left:734px;top:424px" width="13" height="16" viewBox="0 0 13 16"><path d="M2 5 Q2 1 6.5 1 Q11 1 11 4.5 Q11 7 8 8.5 L7.5 10.5 H4.8 L5 7.5 Q8 6.2 8 4.6 Q8 3.3 6.5 3.3 Q5 3.3 5 5 Z" fill="#ffff00" stroke="#000" stroke-width="0.9"/><rect x="4.6" y="11.8" width="3.2" height="3" fill="#ffff00" stroke="#000" stroke-width="0.9"/></svg>
<div class="a" style="left:753px;top:399px;width:1px;height:46px;background:#b4b4b4"></div>
<div class="a" style="left:754px;top:399px;width:34px;height:46px;background:#f0f0f0"></div>
<svg style="left:755px;top:405px" width="32" height="32" viewBox="0 0 32 32" shape-rendering="crispEdges"><rect x="0.5" y="0.5" width="31" height="31" fill="#fff" stroke="#000"/><rect x="2" y="3" width="21" height="16" fill="#c8c0a0" stroke="#333" stroke-width="1"/><rect x="4" y="5" width="13" height="10" fill="#000"/><path d="M4 10 Q6 5 8 10 T12 10 T16 10" fill="none" stroke="#2ed02e" stroke-width="1.2" shape-rendering="geometricPrecision"/><rect x="18" y="6" width="3" height="2" fill="#333"/><rect x="18" y="11" width="3" height="2" fill="#333"/><path d="M3 22 Q8 28 14 22 L18 20" fill="none" stroke="#1030c0" stroke-width="1.2" shape-rendering="geometricPrecision"/><path d="M8 20 Q12 16 16 19 L31 18" fill="none" stroke="#e02020" stroke-width="1" shape-rendering="geometricPrecision"/><path d="M17 14 L28 19 L17 25 Z" fill="#ffe000" stroke="#555" stroke-width="0.8" shape-rendering="geometricPrecision"/><rect x="20" y="18" width="3" height="1" fill="#000"/><rect x="21" y="17" width="1" height="3" fill="#000"/></svg>
<div class="a" style="left:771px;top:445px;width:17px;height:331px;background:#f0f0f0"></div>
<div class="a" style="left:773px;top:464px;width:13px;height:312px;background:#cdcdcd"></div>
<svg style="left:774px;top:450px" width="11" height="8" viewBox="0 0 11 8"><path d="M1.5 6.5 L5.5 2.5 L9.5 6.5" fill="none" stroke="#606060" stroke-width="1.8"/></svg>
<div class="a" style="left:322px;top:455px;width:0;height:14px;"><div class="t" style="left:0;top:0;font-size:12px;color:#000;transform:scaleX(0.97);transform-origin:0 50%;">Intensity Graph</div></div>
<div class="a" style="left:322px;top:474px;width:365px;height:310px;background:linear-gradient(135deg,#e2e2e2,#d6d6d6 40%,#cfcfcf);border:1px solid #b0b0b0;border-top-color:#c8c8c8;border-left-color:#c8c8c8;border-radius:4px"></div>
<div class="a" style="left:323px;top:475px;width:363px;height:2px;background:#f0f0f0;border-radius:3px 3px 0 0"></div>
<svg style="left:387px;top:490px" width="280" height="245" viewBox="0 0 280 245" shape-rendering="crispEdges"><rect width="280" height="245" fill="#000"/><path d="M101 44h1v1h-1zM106 44h1v1h-1zM112 44h1v1h-1zM115 45h1v1h-1zM83 46h1v1h-1zM89 46h1v1h-1zM104 46h1v1h-1zM111 46h1v1h-1zM116 46h1v1h-1zM83 47h1v1h-1zM101 47h1v1h-1zM108 47h1v1h-1zM118 47h1v1h-1zM78 48h1v1h-1zM82 48h4v1h-4zM101 48h1v1h-1zM122 48h1v1h-1zM78 49h1v1h-1zM80 49h1v1h-1zM85 49h2v1h-2zM89 49h2v1h-2zM93 49h1v1h-1zM110 49h1v1h-1zM115 49h1v1h-1zM120 49h1v1h-1zM125 49h1v1h-1zM89 50h1v1h-1zM100 50h1v1h-1zM113 50h1v1h-1zM74 51h1v1h-1zM97 51h3v1h-3zM101 51h1v1h-1zM103 51h3v1h-3zM110 51h1v1h-1zM114 51h1v1h-1zM116 51h1v1h-1zM119 51h2v1h-2zM122 51h1v1h-1zM80 52h1v1h-1zM83 52h1v1h-1zM94 52h2v1h-2zM97 52h1v1h-1zM100 52h1v1h-1zM102 52h3v1h-3zM106 52h3v1h-3zM112 52h1v1h-1zM115 52h2v1h-2zM119 52h3v1h-3zM124 52h1v1h-1zM127 52h1v1h-1zM73 53h1v1h-1zM78 53h1v1h-1zM83 53h1v1h-1zM87 53h3v1h-3zM94 53h12v1h-12zM107 53h6v1h-6zM114 53h2v1h-2zM117 53h2v1h-2zM121 53h2v1h-2zM124 53h1v1h-1zM126 53h3v1h-3zM130 53h1v1h-1zM69 54h1v1h-1zM77 54h1v1h-1zM88 54h2v1h-2zM91 54h16v1h-16zM108 54h10v1h-10zM119 54h1v1h-1zM123 54h1v1h-1zM125 54h1v1h-1zM128 54h1v1h-1zM68 55h1v1h-1zM81 55h1v1h-1zM84 55h7v1h-7zM92 55h23v1h-23zM116 55h5v1h-5zM123 55h1v1h-1zM128 55h3v1h-3zM132 55h1v1h-1zM68 56h1v1h-1zM83 56h7v1h-7zM91 56h39v1h-39zM133 56h1v1h-1zM65 57h1v1h-1zM82 57h14v1h-14zM97 57h18v1h-18zM116 57h12v1h-12zM129 57h1v1h-1zM131 57h2v1h-2zM73 58h1v1h-1zM80 58h53v1h-53zM66 59h1v1h-1zM73 59h1v1h-1zM77 59h1v1h-1zM79 59h53v1h-53zM133 59h2v1h-2zM136 59h1v1h-1zM76 60h1v1h-1zM78 60h1v1h-1zM80 60h5v1h-5zM86 60h33v1h-33zM120 60h16v1h-16zM66 61h1v1h-1zM77 61h3v1h-3zM81 61h7v1h-7zM89 61h11v1h-11zM101 61h18v1h-18zM120 61h15v1h-15zM62 62h2v1h-2zM74 62h5v1h-5zM80 62h18v1h-18zM99 62h29v1h-29zM129 62h4v1h-4zM134 62h4v1h-4zM68 63h1v1h-1zM70 63h1v1h-1zM72 63h16v1h-16zM89 63h4v1h-4zM94 63h32v1h-32zM127 63h7v1h-7zM136 63h1v1h-1zM73 64h32v1h-32zM106 64h29v1h-29zM63 65h1v1h-1zM70 65h1v1h-1zM72 65h13v1h-13zM86 65h50v1h-50zM137 65h1v1h-1zM69 66h1v1h-1zM71 66h6v1h-6zM79 66h7v1h-7zM87 66h13v1h-13zM101 66h11v1h-11zM113 66h5v1h-5zM119 66h8v1h-8zM128 66h8v1h-8zM59 67h1v1h-1zM61 67h1v1h-1zM65 67h1v1h-1zM68 67h2v1h-2zM71 67h4v1h-4zM76 67h49v1h-49zM126 67h4v1h-4zM131 67h3v1h-3zM135 67h3v1h-3zM68 68h1v1h-1zM70 68h5v1h-5zM76 68h26v1h-26zM103 68h16v1h-16zM120 68h5v1h-5zM126 68h14v1h-14zM67 69h1v1h-1zM70 69h19v1h-19zM90 69h15v1h-15zM106 69h21v1h-21zM128 69h1v1h-1zM130 69h6v1h-6zM58 70h1v1h-1zM67 70h7v1h-7zM75 70h38v1h-38zM114 70h17v1h-17zM132 70h3v1h-3zM136 70h1v1h-1zM138 70h2v1h-2zM57 71h1v1h-1zM63 71h1v1h-1zM66 71h21v1h-21zM88 71h25v1h-25zM114 71h2v1h-2zM117 71h8v1h-8zM126 71h1v1h-1zM128 71h1v1h-1zM130 71h10v1h-10zM63 72h30v1h-30zM94 72h32v1h-32zM127 72h2v1h-2zM130 72h4v1h-4zM136 72h3v1h-3zM57 73h1v1h-1zM61 73h1v1h-1zM64 73h12v1h-12zM77 73h27v1h-27zM105 73h22v1h-22zM128 73h8v1h-8zM139 73h2v1h-2zM58 74h2v1h-2zM62 74h2v1h-2zM65 74h17v1h-17zM83 74h5v1h-5zM89 74h43v1h-43zM133 74h4v1h-4zM139 74h1v1h-1zM58 75h1v1h-1zM60 75h34v1h-34zM95 75h36v1h-36zM132 75h1v1h-1zM134 75h4v1h-4zM140 75h1v1h-1zM57 76h1v1h-1zM61 76h1v1h-1zM63 76h33v1h-33zM97 76h3v1h-3zM101 76h30v1h-30zM133 76h6v1h-6zM140 76h1v1h-1zM57 77h6v1h-6zM64 77h8v1h-8zM74 77h13v1h-13zM88 77h10v1h-10zM100 77h4v1h-4zM107 77h16v1h-16zM124 77h1v1h-1zM129 77h3v1h-3zM133 77h2v1h-2zM137 77h1v1h-1zM55 78h1v1h-1zM58 78h36v1h-36zM95 78h3v1h-3zM99 78h3v1h-3zM104 78h6v1h-6zM111 78h3v1h-3zM115 78h11v1h-11zM127 78h3v1h-3zM132 78h12v1h-12zM58 79h1v1h-1zM60 79h19v1h-19zM80 79h1v1h-1zM82 79h14v1h-14zM97 79h24v1h-24zM122 79h6v1h-6zM129 79h3v1h-3zM133 79h2v1h-2zM136 79h6v1h-6zM144 79h1v1h-1zM56 80h1v1h-1zM58 80h1v1h-1zM60 80h3v1h-3zM64 80h14v1h-14zM79 80h2v1h-2zM82 80h9v1h-9zM92 80h3v1h-3zM97 80h6v1h-6zM104 80h14v1h-14zM120 80h4v1h-4zM125 80h2v1h-2zM128 80h14v1h-14zM58 81h22v1h-22zM81 81h3v1h-3zM85 81h7v1h-7zM93 81h2v1h-2zM98 81h1v1h-1zM101 81h2v1h-2zM105 81h2v1h-2zM108 81h25v1h-25zM134 81h2v1h-2zM137 81h1v1h-1zM139 81h1v1h-1zM141 81h1v1h-1zM56 82h33v1h-33zM90 82h5v1h-5zM98 82h1v1h-1zM100 82h1v1h-1zM102 82h2v1h-2zM105 82h14v1h-14zM122 82h8v1h-8zM131 82h4v1h-4zM136 82h2v1h-2zM139 82h4v1h-4zM144 82h1v1h-1zM57 83h1v1h-1zM59 83h6v1h-6zM66 83h22v1h-22zM89 83h1v1h-1zM92 83h1v1h-1zM95 83h1v1h-1zM98 83h1v1h-1zM103 83h1v1h-1zM105 83h1v1h-1zM108 83h20v1h-20zM129 83h1v1h-1zM131 83h3v1h-3zM135 83h1v1h-1zM137 83h3v1h-3zM142 83h4v1h-4zM57 84h1v1h-1zM59 84h8v1h-8zM68 84h18v1h-18zM88 84h1v1h-1zM90 84h2v1h-2zM94 84h1v1h-1zM97 84h1v1h-1zM99 84h1v1h-1zM101 84h2v1h-2zM104 84h1v1h-1zM106 84h1v1h-1zM108 84h11v1h-11zM120 84h7v1h-7zM129 84h1v1h-1zM131 84h3v1h-3zM135 84h3v1h-3zM139 84h1v1h-1zM141 84h4v1h-4zM57 85h3v1h-3zM61 85h1v1h-1zM63 85h2v1h-2zM66 85h24v1h-24zM93 85h1v1h-1zM99 85h1v1h-1zM108 85h5v1h-5zM115 85h8v1h-8zM124 85h4v1h-4zM131 85h1v1h-1zM133 85h3v1h-3zM138 85h4v1h-4zM143 85h3v1h-3zM57 86h8v1h-8zM66 86h10v1h-10zM77 86h11v1h-11zM90 86h1v1h-1zM107 86h18v1h-18zM127 86h3v1h-3zM131 86h2v1h-2zM135 86h1v1h-1zM137 86h2v1h-2zM140 86h5v1h-5zM57 87h29v1h-29zM87 87h1v1h-1zM89 87h3v1h-3zM102 87h2v1h-2zM105 87h1v1h-1zM107 87h11v1h-11zM119 87h6v1h-6zM126 87h5v1h-5zM133 87h1v1h-1zM136 87h1v1h-1zM138 87h3v1h-3zM142 87h3v1h-3zM54 88h1v1h-1zM56 88h31v1h-31zM89 88h1v1h-1zM100 88h1v1h-1zM106 88h1v1h-1zM108 88h1v1h-1zM110 88h8v1h-8zM119 88h8v1h-8zM131 88h2v1h-2zM134 88h3v1h-3zM138 88h1v1h-1zM140 88h1v1h-1zM144 88h1v1h-1zM55 89h1v1h-1zM58 89h1v1h-1zM60 89h2v1h-2zM63 89h20v1h-20zM84 89h5v1h-5zM98 89h1v1h-1zM106 89h1v1h-1zM108 89h1v1h-1zM111 89h11v1h-11zM123 89h2v1h-2zM127 89h10v1h-10zM139 89h4v1h-4zM144 89h2v1h-2zM56 90h30v1h-30zM87 90h2v1h-2zM101 90h1v1h-1zM108 90h1v1h-1zM110 90h14v1h-14zM125 90h1v1h-1zM127 90h1v1h-1zM129 90h3v1h-3zM133 90h10v1h-10zM145 90h1v1h-1zM55 91h2v1h-2zM58 91h1v1h-1zM60 91h20v1h-20zM82 91h3v1h-3zM86 91h3v1h-3zM99 91h1v1h-1zM103 91h2v1h-2zM107 91h3v1h-3zM111 91h9v1h-9zM121 91h6v1h-6zM128 91h1v1h-1zM130 91h4v1h-4zM135 91h1v1h-1zM137 91h5v1h-5zM54 92h3v1h-3zM58 92h22v1h-22zM81 92h5v1h-5zM88 92h3v1h-3zM92 92h1v1h-1zM95 92h1v1h-1zM105 92h1v1h-1zM108 92h13v1h-13zM122 92h5v1h-5zM128 92h4v1h-4zM133 92h2v1h-2zM137 92h6v1h-6zM145 92h1v1h-1zM56 93h31v1h-31zM89 93h1v1h-1zM95 93h2v1h-2zM107 93h1v1h-1zM111 93h1v1h-1zM113 93h5v1h-5zM119 93h10v1h-10zM130 93h2v1h-2zM139 93h1v1h-1zM55 94h1v1h-1zM57 94h24v1h-24zM82 94h5v1h-5zM88 94h1v1h-1zM95 94h2v1h-2zM100 94h2v1h-2zM107 94h1v1h-1zM110 94h9v1h-9zM120 94h8v1h-8zM129 94h4v1h-4zM134 94h2v1h-2zM141 94h1v1h-1zM145 94h1v1h-1zM56 95h26v1h-26zM83 95h3v1h-3zM87 95h1v1h-1zM108 95h3v1h-3zM112 95h2v1h-2zM115 95h6v1h-6zM122 95h2v1h-2zM125 95h1v1h-1zM128 95h2v1h-2zM131 95h6v1h-6zM140 95h1v1h-1zM142 95h1v1h-1zM54 96h33v1h-33zM89 96h1v1h-1zM92 96h1v1h-1zM95 96h1v1h-1zM98 96h1v1h-1zM100 96h1v1h-1zM102 96h1v1h-1zM111 96h4v1h-4zM116 96h4v1h-4zM121 96h10v1h-10zM136 96h4v1h-4zM143 96h1v1h-1zM53 97h1v1h-1zM55 97h2v1h-2zM58 97h28v1h-28zM87 97h1v1h-1zM89 97h1v1h-1zM91 97h1v1h-1zM106 97h1v1h-1zM109 97h5v1h-5zM115 97h10v1h-10zM126 97h1v1h-1zM128 97h4v1h-4zM134 97h2v1h-2zM137 97h1v1h-1zM139 97h2v1h-2zM54 98h1v1h-1zM56 98h1v1h-1zM58 98h8v1h-8zM67 98h2v1h-2zM70 98h6v1h-6zM77 98h9v1h-9zM87 98h1v1h-1zM89 98h1v1h-1zM102 98h1v1h-1zM106 98h3v1h-3zM111 98h12v1h-12zM124 98h15v1h-15zM53 99h2v1h-2zM56 99h32v1h-32zM90 99h1v1h-1zM108 99h2v1h-2zM111 99h4v1h-4zM116 99h14v1h-14zM131 99h1v1h-1zM133 99h2v1h-2zM54 100h1v1h-1zM57 100h32v1h-32zM93 100h2v1h-2zM97 100h2v1h-2zM105 100h1v1h-1zM107 100h2v1h-2zM111 100h15v1h-15zM127 100h6v1h-6zM135 100h1v1h-1zM59 101h9v1h-9zM69 101h8v1h-8zM78 101h8v1h-8zM88 101h1v1h-1zM91 101h1v1h-1zM95 101h1v1h-1zM108 101h2v1h-2zM111 101h1v1h-1zM113 101h5v1h-5zM119 101h2v1h-2zM122 101h2v1h-2zM127 101h1v1h-1zM130 101h1v1h-1zM135 101h1v1h-1zM137 101h1v1h-1zM139 101h1v1h-1zM58 102h27v1h-27zM86 102h2v1h-2zM91 102h1v1h-1zM96 102h1v1h-1zM107 102h3v1h-3zM111 102h19v1h-19zM131 102h4v1h-4zM136 102h3v1h-3zM60 103h24v1h-24zM85 103h1v1h-1zM87 103h1v1h-1zM91 103h1v1h-1zM105 103h2v1h-2zM109 103h8v1h-8zM118 103h1v1h-1zM120 103h2v1h-2zM123 103h3v1h-3zM127 103h8v1h-8zM136 103h1v1h-1zM59 104h31v1h-31zM91 104h2v1h-2zM96 104h1v1h-1zM104 104h1v1h-1zM107 104h2v1h-2zM110 104h2v1h-2zM113 104h14v1h-14zM129 104h4v1h-4zM134 104h3v1h-3zM139 104h1v1h-1zM62 105h1v1h-1zM64 105h26v1h-26zM92 105h1v1h-1zM95 105h1v1h-1zM97 105h1v1h-1zM104 105h2v1h-2zM107 105h1v1h-1zM110 105h8v1h-8zM120 105h5v1h-5zM126 105h6v1h-6zM133 105h1v1h-1zM136 105h1v1h-1zM60 106h1v1h-1zM62 106h10v1h-10zM73 106h15v1h-15zM89 106h1v1h-1zM96 106h1v1h-1zM101 106h1v1h-1zM103 106h1v1h-1zM105 106h3v1h-3zM109 106h6v1h-6zM116 106h1v1h-1zM118 106h8v1h-8zM129 106h4v1h-4zM63 107h26v1h-26zM91 107h1v1h-1zM102 107h1v1h-1zM107 107h20v1h-20zM128 107h1v1h-1zM131 107h3v1h-3zM136 107h1v1h-1zM64 108h2v1h-2zM67 108h23v1h-23zM94 108h2v1h-2zM101 108h1v1h-1zM103 108h1v1h-1zM105 108h1v1h-1zM108 108h1v1h-1zM110 108h2v1h-2zM113 108h2v1h-2zM116 108h5v1h-5zM122 108h1v1h-1zM125 108h3v1h-3zM129 108h5v1h-5zM62 109h1v1h-1zM67 109h23v1h-23zM99 109h1v1h-1zM101 109h2v1h-2zM104 109h1v1h-1zM106 109h17v1h-17zM124 109h4v1h-4zM129 109h3v1h-3zM133 109h1v1h-1zM65 110h1v1h-1zM69 110h3v1h-3zM73 110h15v1h-15zM89 110h4v1h-4zM94 110h1v1h-1zM96 110h2v1h-2zM100 110h1v1h-1zM103 110h12v1h-12zM116 110h6v1h-6zM123 110h9v1h-9zM66 111h3v1h-3zM70 111h13v1h-13zM84 111h2v1h-2zM87 111h2v1h-2zM90 111h1v1h-1zM92 111h1v1h-1zM99 111h2v1h-2zM102 111h1v1h-1zM105 111h14v1h-14zM120 111h5v1h-5zM127 111h2v1h-2zM131 111h1v1h-1zM133 111h1v1h-1zM68 112h17v1h-17zM86 112h4v1h-4zM91 112h1v1h-1zM93 112h3v1h-3zM98 112h1v1h-1zM100 112h1v1h-1zM102 112h1v1h-1zM104 112h14v1h-14zM119 112h8v1h-8zM128 112h2v1h-2zM72 113h4v1h-4zM77 113h25v1h-25zM103 113h1v1h-1zM105 113h14v1h-14zM120 113h2v1h-2zM123 113h2v1h-2zM128 113h1v1h-1zM130 113h1v1h-1zM133 113h1v1h-1zM69 114h1v1h-1zM71 114h3v1h-3zM75 114h18v1h-18zM94 114h3v1h-3zM98 114h2v1h-2zM103 114h17v1h-17zM121 114h4v1h-4zM126 114h1v1h-1zM128 114h2v1h-2zM75 115h16v1h-16zM92 115h10v1h-10zM103 115h23v1h-23zM73 116h2v1h-2zM76 116h17v1h-17zM94 116h3v1h-3zM98 116h5v1h-5zM104 116h15v1h-15zM120 116h1v1h-1zM122 116h1v1h-1zM124 116h1v1h-1zM127 116h1v1h-1zM75 117h1v1h-1zM78 117h27v1h-27zM106 117h12v1h-12zM121 117h1v1h-1zM125 117h1v1h-1zM74 118h1v1h-1zM78 118h1v1h-1zM80 118h2v1h-2zM84 118h5v1h-5zM90 118h13v1h-13zM106 118h9v1h-9zM116 118h1v1h-1zM118 118h1v1h-1zM120 118h1v1h-1zM76 119h1v1h-1zM78 119h1v1h-1zM81 119h2v1h-2zM84 119h1v1h-1zM86 119h30v1h-30zM117 119h1v1h-1zM119 119h1v1h-1zM76 120h1v1h-1zM78 120h2v1h-2zM82 120h1v1h-1zM84 120h2v1h-2zM87 120h1v1h-1zM89 120h15v1h-15zM105 120h10v1h-10zM116 120h2v1h-2zM81 121h1v1h-1zM83 121h1v1h-1zM86 121h1v1h-1zM89 121h26v1h-26zM116 121h2v1h-2zM82 122h2v1h-2zM86 122h2v1h-2zM89 122h3v1h-3zM93 122h18v1h-18zM112 122h3v1h-3zM85 123h1v1h-1zM89 123h1v1h-1zM92 123h1v1h-1zM95 123h10v1h-10zM106 123h3v1h-3zM110 123h2v1h-2zM114 123h1v1h-1zM89 124h1v1h-1zM93 124h1v1h-1zM95 124h1v1h-1zM98 124h9v1h-9zM108 124h2v1h-2zM97 125h3v1h-3zM101 125h3v1h-3zM106 125h1v1h-1zM108 125h1v1h-1zM111 125h2v1h-2zM103 126h1v1h-1zM106 126h2v1h-2zM98 127h1v1h-1zM103 127h1v1h-1zM101 128h1v1h-1zM64 141h1v1h-1zM92 146h1v1h-1zM92 148h2v1h-2zM111 150h1v1h-1zM82 152h1v1h-1zM81 153h1v1h-1zM101 154h1v1h-1zM72 156h1v1h-1zM90 157h1v1h-1zM68 159h1v1h-1zM78 160h1v1h-1zM91 163h1v1h-1zM108 163h1v1h-1zM65 164h1v1h-1zM57 166h1v1h-1zM68 166h1v1h-1zM80 166h1v1h-1zM65 167h1v1h-1zM89 167h1v1h-1zM77 168h1v1h-1zM81 168h1v1h-1zM68 169h1v1h-1zM71 169h1v1h-1zM75 169h1v1h-1zM89 169h1v1h-1zM67 170h1v1h-1zM87 170h1v1h-1zM57 171h1v1h-1zM80 171h1v1h-1zM89 171h1v1h-1zM59 173h1v1h-1zM69 174h1v1h-1zM100 174h1v1h-1zM77 177h1v1h-1zM92 179h1v1h-1zM83 181h1v1h-1zM92 182h1v1h-1zM82 183h1v1h-1zM91 183h1v1h-1zM69 184h1v1h-1zM73 184h1v1h-1zM86 185h1v1h-1zM88 187h1v1h-1z" fill="#800000"/><path d="M36 2h1v1h-1zM149 2h1v1h-1zM186 2h1v1h-1zM83 4h1v1h-1zM209 6h1v1h-1zM3 7h1v1h-1zM44 7h1v1h-1zM61 7h1v1h-1zM90 7h1v1h-1zM5 9h1v1h-1zM115 10h1v1h-1zM35 12h1v1h-1zM142 12h1v1h-1zM143 13h1v1h-1zM68 14h1v1h-1zM161 15h1v1h-1zM267 15h1v1h-1zM268 16h1v1h-1zM73 18h1v1h-1zM25 19h1v1h-1zM204 19h1v1h-1zM243 19h1v1h-1zM205 20h1v1h-1zM125 23h1v1h-1zM138 24h1v1h-1zM116 25h1v1h-1zM223 26h1v1h-1zM219 29h1v1h-1zM276 29h1v1h-1zM112 30h1v1h-1zM63 31h1v1h-1zM164 31h1v1h-1zM107 32h1v1h-1zM75 33h1v1h-1zM270 33h1v1h-1zM130 34h1v1h-1zM147 35h1v1h-1zM98 36h1v1h-1zM43 37h1v1h-1zM100 37h1v1h-1zM3 38h1v1h-1zM16 39h1v1h-1zM121 39h1v1h-1zM216 39h1v1h-1zM132 40h1v1h-1zM129 41h1v1h-1zM191 42h1v1h-1zM78 43h1v1h-1zM86 43h1v1h-1zM10 44h1v1h-1zM190 44h1v1h-1zM254 44h1v1h-1zM56 45h1v1h-1zM3 46h1v1h-1zM36 46h1v1h-1zM174 46h1v1h-1zM7 49h1v1h-1zM34 49h1v1h-1zM137 49h1v1h-1zM205 49h1v1h-1zM66 51h1v1h-1zM78 51h1v1h-1zM127 51h1v1h-1zM200 51h1v1h-1zM45 52h1v1h-1zM59 52h1v1h-1zM72 53h1v1h-1zM46 54h1v1h-1zM245 54h1v1h-1zM274 54h1v1h-1zM13 55h1v1h-1zM175 55h1v1h-1zM134 56h1v1h-1zM32 58h1v1h-1zM169 60h1v1h-1zM48 61h2v1h-2zM63 61h1v1h-1zM172 65h1v1h-1zM42 66h1v1h-1zM272 66h1v1h-1zM42 68h1v1h-1zM144 69h1v1h-1zM26 71h1v1h-1zM177 71h1v1h-1zM154 72h1v1h-1zM175 72h1v1h-1zM160 74h1v1h-1zM152 75h1v1h-1zM161 75h1v1h-1zM270 75h1v1h-1zM204 76h1v1h-1zM183 77h1v1h-1zM148 78h1v1h-1zM55 81h1v1h-1zM20 84h1v1h-1zM86 84h1v1h-1zM157 85h1v1h-1zM276 86h1v1h-1zM104 87h1v1h-1zM177 87h1v1h-1zM42 88h1v1h-1zM215 88h1v1h-1zM109 90h1v1h-1zM186 90h1v1h-1zM15 91h1v1h-1zM235 92h1v1h-1zM3 94h1v1h-1zM139 94h1v1h-1zM10 95h1v1h-1zM90 95h1v1h-1zM94 97h1v1h-1zM138 97h1v1h-1zM141 97h1v1h-1zM233 97h1v1h-1zM223 98h1v1h-1zM207 99h1v1h-1zM44 101h1v1h-1zM106 101h1v1h-1zM30 104h1v1h-1zM177 104h1v1h-1zM46 105h1v1h-1zM117 106h1v1h-1zM204 106h1v1h-1zM220 107h1v1h-1zM138 108h1v1h-1zM224 109h1v1h-1zM122 110h1v1h-1zM89 111h1v1h-1zM97 111h1v1h-1zM85 112h1v1h-1zM57 114h1v1h-1zM257 114h1v1h-1zM18 116h1v1h-1zM204 116h1v1h-1zM259 117h1v1h-1zM41 118h1v1h-1zM121 118h1v1h-1zM38 119h1v1h-1zM66 119h1v1h-1zM136 119h1v1h-1zM168 119h1v1h-1zM233 119h1v1h-1zM184 120h1v1h-1zM135 121h1v1h-1zM183 121h1v1h-1zM83 124h1v1h-1zM112 124h1v1h-1zM168 124h1v1h-1zM117 125h1v1h-1zM7 127h1v1h-1zM19 127h1v1h-1zM123 127h1v1h-1zM243 127h1v1h-1zM137 128h1v1h-1zM15 129h1v1h-1zM135 129h2v1h-2zM267 129h1v1h-1zM31 130h1v1h-1zM62 130h1v1h-1zM44 131h1v1h-1zM200 131h1v1h-1zM64 132h1v1h-1zM126 132h1v1h-1zM187 132h1v1h-1zM245 132h1v1h-1zM48 133h1v1h-1zM24 134h1v1h-1zM116 134h1v1h-1zM90 135h1v1h-1zM100 136h1v1h-1zM123 137h1v1h-1zM183 137h1v1h-1zM224 138h1v1h-1zM9 139h1v1h-1zM74 139h1v1h-1zM91 139h1v1h-1zM127 139h1v1h-1zM88 140h1v1h-1zM60 141h1v1h-1zM78 141h1v1h-1zM96 141h1v1h-1zM182 142h1v1h-1zM131 143h1v1h-1zM236 144h1v1h-1zM143 145h1v1h-1zM93 146h1v1h-1zM30 147h1v1h-1zM148 147h1v1h-1zM241 148h1v1h-1zM268 148h1v1h-1zM61 149h1v1h-1zM79 149h1v1h-1zM136 149h1v1h-1zM202 149h1v1h-1zM8 150h1v1h-1zM77 152h1v1h-1zM79 152h1v1h-1zM107 152h1v1h-1zM151 152h1v1h-1zM86 153h1v1h-1zM270 153h1v1h-1zM91 154h1v1h-1zM96 154h1v1h-1zM145 154h1v1h-1zM82 155h1v1h-1zM121 155h1v1h-1zM43 156h1v1h-1zM81 156h1v1h-1zM100 156h1v1h-1zM67 157h1v1h-1zM128 157h1v1h-1zM81 158h1v1h-1zM88 158h1v1h-1zM93 158h1v1h-1zM104 159h1v1h-1zM107 159h1v1h-1zM278 159h1v1h-1zM236 160h1v1h-1zM243 160h1v1h-1zM53 161h1v1h-1zM85 161h1v1h-1zM92 161h1v1h-1zM99 162h1v1h-1zM79 164h1v1h-1zM89 164h1v1h-1zM191 164h1v1h-1zM64 165h1v1h-1zM113 165h1v1h-1zM210 165h1v1h-1zM212 165h1v1h-1zM98 166h1v1h-1zM221 166h1v1h-1zM64 167h1v1h-1zM80 167h1v1h-1zM173 167h1v1h-1zM100 168h1v1h-1zM125 168h1v1h-1zM147 168h1v1h-1zM61 170h1v1h-1zM69 170h1v1h-1zM78 170h1v1h-1zM99 170h1v1h-1zM23 171h1v1h-1zM110 172h1v1h-1zM87 173h1v1h-1zM53 174h1v1h-1zM79 174h1v1h-1zM73 175h1v1h-1zM78 175h1v1h-1zM83 176h1v1h-1zM240 176h1v1h-1zM63 177h1v1h-1zM265 178h1v1h-1zM10 179h1v1h-1zM74 179h1v1h-1zM82 179h1v1h-1zM100 179h1v1h-1zM141 179h1v1h-1zM202 179h1v1h-1zM87 180h1v1h-1zM124 180h1v1h-1zM126 180h1v1h-1zM63 181h1v1h-1zM20 183h1v1h-1zM169 185h1v1h-1zM171 185h1v1h-1zM205 185h1v1h-1zM221 185h1v1h-1zM22 186h1v1h-1zM49 186h1v1h-1zM2 187h1v1h-1zM89 187h1v1h-1zM159 188h1v1h-1zM83 189h1v1h-1zM95 190h1v1h-1zM125 190h1v1h-1zM76 191h1v1h-1zM205 191h1v1h-1zM219 191h1v1h-1zM226 191h1v1h-1zM13 193h1v1h-1zM125 194h1v1h-1zM128 194h1v1h-1zM197 194h1v1h-1zM7 195h1v1h-1zM189 195h1v1h-1zM193 196h1v1h-1zM97 198h1v1h-1zM225 198h1v1h-1zM234 198h1v1h-1zM274 199h1v1h-1zM269 201h1v1h-1zM15 203h1v1h-1zM89 204h1v1h-1zM51 207h1v1h-1zM6 208h1v1h-1zM239 208h1v1h-1zM90 210h1v1h-1zM207 214h1v1h-1zM9 215h1v1h-1zM153 215h1v1h-1zM190 216h1v1h-1zM248 216h1v1h-1zM76 217h1v1h-1zM186 217h1v1h-1zM229 217h1v1h-1zM232 217h1v1h-1zM77 218h1v1h-1zM102 218h1v1h-1zM141 221h1v1h-1zM90 222h1v1h-1zM138 222h1v1h-1zM203 222h1v1h-1zM62 223h1v1h-1zM108 223h1v1h-1zM271 224h1v1h-1zM207 226h1v1h-1zM255 226h1v1h-1zM135 229h1v1h-1zM12 230h1v1h-1zM235 231h1v1h-1zM33 232h1v1h-1zM252 232h1v1h-1zM56 234h1v1h-1zM8 235h1v1h-1zM202 235h1v1h-1zM257 235h1v1h-1zM159 237h1v1h-1zM190 237h1v1h-1zM51 240h1v1h-1zM80 240h1v1h-1zM165 240h1v1h-1zM28 241h1v1h-1z" fill="#b80000"/><path d="M102 42h1v1h-1zM108 42h1v1h-1zM103 43h2v1h-2zM106 43h1v1h-1zM108 43h1v1h-1zM115 43h1v1h-1zM88 44h1v1h-1zM92 44h6v1h-6zM102 44h1v1h-1zM104 44h1v1h-1zM108 44h1v1h-1zM111 44h1v1h-1zM113 44h1v1h-1zM115 44h1v1h-1zM89 45h5v1h-5zM95 45h2v1h-2zM98 45h1v1h-1zM100 45h5v1h-5zM106 45h6v1h-6zM113 45h2v1h-2zM116 45h1v1h-1zM85 46h1v1h-1zM91 46h9v1h-9zM101 46h3v1h-3zM105 46h6v1h-6zM112 46h4v1h-4zM117 46h1v1h-1zM123 46h1v1h-1zM81 47h1v1h-1zM84 47h17v1h-17zM102 47h4v1h-4zM107 47h1v1h-1zM109 47h9v1h-9zM119 47h2v1h-2zM122 47h1v1h-1zM79 48h1v1h-1zM81 48h1v1h-1zM87 48h1v1h-1zM89 48h12v1h-12zM102 48h19v1h-19zM123 48h1v1h-1zM81 49h4v1h-4zM87 49h2v1h-2zM91 49h2v1h-2zM94 49h5v1h-5zM100 49h10v1h-10zM111 49h4v1h-4zM116 49h4v1h-4zM121 49h2v1h-2zM75 50h2v1h-2zM79 50h3v1h-3zM83 50h6v1h-6zM90 50h10v1h-10zM101 50h3v1h-3zM105 50h8v1h-8zM114 50h7v1h-7zM122 50h1v1h-1zM75 51h1v1h-1zM77 51h1v1h-1zM79 51h11v1h-11zM92 51h4v1h-4zM100 51h1v1h-1zM102 51h1v1h-1zM106 51h4v1h-4zM111 51h3v1h-3zM115 51h1v1h-1zM117 51h2v1h-2zM121 51h1v1h-1zM123 51h3v1h-3zM128 51h1v1h-1zM73 52h1v1h-1zM75 52h2v1h-2zM78 52h2v1h-2zM81 52h2v1h-2zM84 52h8v1h-8zM93 52h1v1h-1zM96 52h1v1h-1zM98 52h2v1h-2zM101 52h1v1h-1zM105 52h1v1h-1zM109 52h2v1h-2zM113 52h2v1h-2zM117 52h2v1h-2zM122 52h2v1h-2zM125 52h2v1h-2zM74 53h4v1h-4zM79 53h4v1h-4zM84 53h3v1h-3zM90 53h4v1h-4zM113 53h1v1h-1zM119 53h2v1h-2zM123 53h1v1h-1zM125 53h1v1h-1zM72 54h5v1h-5zM79 54h2v1h-2zM82 54h6v1h-6zM90 54h1v1h-1zM118 54h1v1h-1zM120 54h3v1h-3zM124 54h1v1h-1zM71 55h10v1h-10zM82 55h2v1h-2zM121 55h2v1h-2zM124 55h3v1h-3zM70 56h3v1h-3zM74 56h9v1h-9zM90 56h1v1h-1zM66 57h4v1h-4zM71 57h2v1h-2zM74 57h6v1h-6zM81 57h1v1h-1zM115 57h1v1h-1zM66 58h1v1h-1zM69 58h1v1h-1zM71 58h2v1h-2zM74 58h3v1h-3zM78 58h2v1h-2zM65 59h1v1h-1zM67 59h4v1h-4zM72 59h1v1h-1zM74 59h3v1h-3zM78 59h1v1h-1zM64 60h1v1h-1zM66 60h10v1h-10zM77 60h1v1h-1zM85 60h1v1h-1zM64 61h2v1h-2zM67 61h10v1h-10zM100 61h1v1h-1zM64 62h10v1h-10zM79 62h1v1h-1zM98 62h1v1h-1zM61 63h7v1h-7zM71 63h1v1h-1zM88 63h1v1h-1zM61 64h8v1h-8zM70 64h3v1h-3zM60 65h3v1h-3zM64 65h6v1h-6zM71 65h1v1h-1zM85 65h1v1h-1zM61 66h8v1h-8zM70 66h1v1h-1zM86 66h1v1h-1zM112 66h1v1h-1zM60 67h1v1h-1zM62 67h3v1h-3zM66 67h2v1h-2zM70 67h1v1h-1zM130 67h1v1h-1zM59 68h9v1h-9zM69 68h1v1h-1zM61 69h6v1h-6zM68 69h2v1h-2zM89 69h1v1h-1zM57 70h1v1h-1zM59 70h8v1h-8zM58 71h5v1h-5zM64 71h2v1h-2zM87 71h1v1h-1zM113 71h1v1h-1zM56 72h7v1h-7zM55 73h1v1h-1zM58 73h3v1h-3zM62 73h2v1h-2zM56 74h1v1h-1zM60 74h2v1h-2zM64 74h1v1h-1zM132 74h1v1h-1zM59 75h1v1h-1zM58 76h1v1h-1zM60 76h1v1h-1zM62 76h1v1h-1zM63 77h1v1h-1zM104 77h1v1h-1zM106 77h1v1h-1zM132 77h1v1h-1zM114 78h1v1h-1zM63 80h1v1h-1zM81 80h1v1h-1zM65 83h1v1h-1zM140 83h1v1h-1zM67 84h1v1h-1zM107 84h1v1h-1zM62 85h1v1h-1zM132 87h1v1h-1zM57 91h1v1h-1zM80 91h1v1h-1zM88 93h1v1h-1zM57 97h1v1h-1zM57 98h1v1h-1zM66 98h1v1h-1zM76 98h1v1h-1zM115 99h1v1h-1zM68 101h1v1h-1zM77 101h1v1h-1zM128 101h1v1h-1zM112 108h1v1h-1zM123 108h1v1h-1zM83 111h1v1h-1zM101 112h1v1h-1zM125 113h1v1h-1zM105 117h1v1h-1zM82 118h2v1h-2zM89 118h1v1h-1zM105 118h1v1h-1zM88 123h1v1h-1zM93 123h1v1h-1zM105 123h1v1h-1z" fill="#ff1a1a"/><path d="M244 2h1v1h-1zM243 22h1v1h-1zM233 41h1v1h-1zM100 44h1v1h-1zM105 44h1v1h-1zM99 45h1v1h-1zM105 45h1v1h-1zM100 46h1v1h-1zM106 47h1v1h-1zM86 48h1v1h-1zM88 48h1v1h-1zM79 49h1v1h-1zM99 49h1v1h-1zM78 50h1v1h-1zM82 50h1v1h-1zM104 50h1v1h-1zM76 51h1v1h-1zM90 51h2v1h-2zM96 51h1v1h-1zM77 52h1v1h-1zM92 52h1v1h-1zM78 54h1v1h-1zM81 54h1v1h-1zM69 56h1v1h-1zM73 56h1v1h-1zM70 57h1v1h-1zM73 57h1v1h-1zM80 57h1v1h-1zM70 58h1v1h-1zM77 58h1v1h-1zM71 59h1v1h-1zM50 60h1v1h-1zM63 60h1v1h-1zM69 63h1v1h-1zM69 64h1v1h-1zM113 70h1v1h-1zM127 73h1v1h-1zM104 88h1v1h-1zM6 100h1v1h-1zM262 119h1v1h-1zM133 125h1v1h-1zM178 131h1v1h-1zM46 135h1v1h-1zM43 138h1v1h-1zM143 142h1v1h-1zM100 158h1v1h-1zM137 192h1v1h-1zM121 197h1v1h-1zM212 206h1v1h-1zM7 240h1v1h-1z" fill="#ffe8e8"/></svg>
<div class="a" style="left:386px;top:489px;width:281px;height:1px;background:#555"></div>
<div class="a" style="left:386px;top:489px;width:1px;height:247px;background:#555"></div>
<div class="a" style="left:378px;top:483.0px;width:0;height:14px;"><div class="t" style="right:0;top:0;font-size:12px;color:#000;transform:scaleX(0.93);transform-origin:100% 50%;">0</div></div>
<div class="a" style="left:380px;top:490px;width:5px;height:1px;background:#000"></div>
<div class="a" style="left:378px;top:505.27272727272725px;width:0;height:14px;"><div class="t" style="right:0;top:0;font-size:12px;color:#000;transform:scaleX(0.93);transform-origin:100% 50%;">100</div></div>
<div class="a" style="left:380px;top:512px;width:5px;height:1px;background:#000"></div>
<div class="a" style="left:378px;top:527.5454545454545px;width:0;height:14px;"><div class="t" style="right:0;top:0;font-size:12px;color:#000;transform:scaleX(0.93);transform-origin:100% 50%;">200</div></div>
<div class="a" style="left:380px;top:535px;width:5px;height:1px;background:#000"></div>
<div class="a" style="left:378px;top:549.8181818181818px;width:0;height:14px;"><div class="t" style="right:0;top:0;font-size:12px;color:#000;transform:scaleX(0.93);transform-origin:100% 50%;">300</div></div>
<div class="a" style="left:380px;top:557px;width:5px;height:1px;background:#000"></div>
<div class="a" style="left:378px;top:572.0909090909091px;width:0;height:14px;"><div class="t" style="right:0;top:0;font-size:12px;color:#000;transform:scaleX(0.93);transform-origin:100% 50%;">400</div></div>
<div class="a" style="left:380px;top:579px;width:5px;height:1px;background:#000"></div>
<div class="a" style="left:378px;top:594.3636363636364px;width:0;height:14px;"><div class="t" style="right:0;top:0;font-size:12px;color:#000;transform:scaleX(0.93);transform-origin:100% 50%;">500</div></div>
<div class="a" style="left:380px;top:601px;width:5px;height:1px;background:#000"></div>
<div class="a" style="left:378px;top:616.6363636363636px;width:0;height:14px;"><div class="t" style="right:0;top:0;font-size:12px;color:#000;transform:scaleX(0.93);transform-origin:100% 50%;">600</div></div>
<div class="a" style="left:380px;top:624px;width:5px;height:1px;background:#000"></div>
<div class="a" style="left:378px;top:638.9090909090909px;width:0;height:14px;"><div class="t" style="right:0;top:0;font-size:12px;color:#000;transform:scaleX(0.93);transform-origin:100% 50%;">700</div></div>
<div class="a" style="left:380px;top:646px;width:5px;height:1px;background:#000"></div>
<div class="a" style="left:378px;top:661.1818181818182px;width:0;height:14px;"><div class="t" style="right:0;top:0;font-size:12px;color:#000;transform:scaleX(0.93);transform-origin:100% 50%;">800</div></div>
<div class="a" style="left:380px;top:668px;width:5px;height:1px;background:#000"></div>
<div class="a" style="left:378px;top:683.4545454545455px;width:0;height:14px;"><div class="t" style="right:0;top:0;font-size:12px;color:#000;transform:scaleX(0.93);transform-origin:100% 50%;">900</div></div>
<div class="a" style="left:380px;top:690px;width:5px;height:1px;background:#000"></div>
<div class="a" style="left:378px;top:705.7272727272727px;width:0;height:14px;"><div class="t" style="right:0;top:0;font-size:12px;color:#000;transform:scaleX(0.93);transform-origin:100% 50%;">1000</div></div>
<div class="a" style="left:380px;top:713px;width:5px;height:1px;background:#000"></div>
<div class="a" style="left:378px;top:728.0px;width:0;height:14px;"><div class="t" style="right:0;top:0;font-size:12px;color:#000;transform:scaleX(0.93);transform-origin:100% 50%;">1100</div></div>
<div class="a" style="left:380px;top:735px;width:5px;height:1px;background:#000"></div>
<div class="a" style="left:387.0px;top:743px;width:0;height:14px;"><div class="t" style="left:0;top:0;font-size:12px;color:#000;transform:translateX(-50%) scaleX(0.93);transform-origin:50% 50%;">0</div></div>
<div class="a" style="left:387px;top:736px;width:1px;height:5px;background:#000"></div>
<div class="a" style="left:422.0px;top:743px;width:0;height:14px;"><div class="t" style="left:0;top:0;font-size:12px;color:#000;transform:translateX(-50%) scaleX(0.93);transform-origin:50% 50%;">200</div></div>
<div class="a" style="left:422px;top:736px;width:1px;height:5px;background:#000"></div>
<div class="a" style="left:457.0px;top:743px;width:0;height:14px;"><div class="t" style="left:0;top:0;font-size:12px;color:#000;transform:translateX(-50%) scaleX(0.93);transform-origin:50% 50%;">400</div></div>
<div class="a" style="left:457px;top:736px;width:1px;height:5px;background:#000"></div>
<div class="a" style="left:492.0px;top:743px;width:0;height:14px;"><div class="t" style="left:0;top:0;font-size:12px;color:#000;transform:translateX(-50%) scaleX(0.93);transform-origin:50% 50%;">600</div></div>
<div class="a" style="left:492px;top:736px;width:1px;height:5px;background:#000"></div>
<div class="a" style="left:527.0px;top:743px;width:0;height:14px;"><div class="t" style="left:0;top:0;font-size:12px;color:#000;transform:translateX(-50%) scaleX(0.93);transform-origin:50% 50%;">800</div></div>
<div class="a" style="left:527px;top:736px;width:1px;height:5px;background:#000"></div>
<div class="a" style="left:562.0px;top:743px;width:0;height:14px;"><div class="t" style="left:0;top:0;font-size:12px;color:#000;transform:translateX(-50%) scaleX(0.93);transform-origin:50% 50%;">1000</div></div>
<div class="a" style="left:562px;top:736px;width:1px;height:5px;background:#000"></div>
<div class="a" style="left:597.0px;top:743px;width:0;height:14px;"><div class="t" style="left:0;top:0;font-size:12px;color:#000;transform:translateX(-50%) scaleX(0.93);transform-origin:50% 50%;">1200</div></div>
<div class="a" style="left:597px;top:736px;width:1px;height:5px;background:#000"></div>
<div class="a" style="left:632.0px;top:743px;width:0;height:14px;"><div class="t" style="left:0;top:0;font-size:12px;color:#000;transform:translateX(-50%) scaleX(0.93);transform-origin:50% 50%;">1400</div></div>
<div class="a" style="left:632px;top:736px;width:1px;height:5px;background:#000"></div>
<div class="a" style="left:667.0px;top:743px;width:0;height:14px;"><div class="t" style="left:0;top:0;font-size:12px;color:#000;transform:translateX(-50%) scaleX(0.93);transform-origin:50% 50%;">1600</div></div>
<div class="a" style="left:667px;top:736px;width:1px;height:5px;background:#000"></div>
<div class="a" style="left:344px;top:605px;width:0;height:14px;"><div class="t" style="left:0;top:0;font-size:12px;color:#000;transform:translateX(-50%) rotate(-90deg) scaleX(0.97);transform-origin:50% 50%;">Frequency</div></div>
<div class="a" style="left:524px;top:760px;width:0;height:14px;"><div class="t" style="left:0;top:0;font-size:12px;color:#000;transform:translateX(-50%) scaleX(0.97);transform-origin:50% 50%;">Time</div></div>
<div class="a" style="left:692px;top:476px;width:21px;height:150px;background:#000"></div>
<div class="a" style="left:693px;top:477px;width:19px;height:3px;background:#fff"></div>
<div class="a" style="left:693px;top:481px;width:19px;height:144px;background:linear-gradient(#ffffff 0%,#ffb8b8 25%,#ff4040 42%,#ff0000 50%,#a00000 68%,#400000 85%,#000000 100%)"></div>
<div class="a" style="left:713px;top:483px;width:4px;height:1px;background:#000"></div>
<div class="a" style="left:718px;top:476px;width:0;height:14px;"><div class="t" style="left:0;top:0;font-size:12px;color:#000;transform:scaleX(0.97);transform-origin:0 50%;">6</div></div>
<div class="a" style="left:718px;top:483px;width:0px;height:0px;"></div>
<div class="a" style="left:713px;top:552px;width:4px;height:1px;background:#000"></div>
<div class="a" style="left:718px;top:545px;width:0;height:14px;"><div class="t" style="left:0;top:0;font-size:12px;color:#000;transform:scaleX(0.97);transform-origin:0 50%;">4</div></div>
<div class="a" style="left:718px;top:552px;width:0px;height:0px;"></div>
<div class="a" style="left:713px;top:619px;width:4px;height:1px;background:#000"></div>
<div class="a" style="left:718px;top:612px;width:0;height:14px;"><div class="t" style="left:0;top:0;font-size:12px;color:#000;transform:scaleX(0.97);transform-origin:0 50%;">2</div></div>
<div class="a" style="left:718px;top:619px;width:0px;height:0px;"></div>
<div class="a" style="left:742px;top:542px;width:0;height:14px;"><div class="t" style="left:0;top:0;font-size:12px;color:#000;transform:translateX(-50%) rotate(90deg) scaleX(0.97);transform-origin:50% 50%;">Amplitude</div></div>
<div class="a" style="left:796px;top:354px;width:424px;height:422px;background:#e4e4e4"></div>
<div class="a" style="left:796px;top:354px;width:424px;height:32px;background:#fff"></div>
<svg style="left:806px;top:361px" width="16" height="16" viewBox="0 0 16 16" shape-rendering="crispEdges"><rect width="16" height="16" fill="#555a60"/><path d="M2.5 2.5 L14 8 L2.5 13.5 Z" fill="#fcd100" shape-rendering="geometricPrecision"/><rect x="4" y="7" width="3" height="1" fill="#5a6478"/><rect x="5" y="6" width="1" height="3" fill="#5a6478"/></svg>
<div class="a" style="left:828px;top:363px;width:0;height:14px;"><div class="t" style="left:0;top:0;font-size:12px;color:#9a9a9a;transform:scaleX(0.97);transform-origin:0 50%;">e-source_main.vi</div></div>
<div class="a" style="left:1133px;top:369px;width:10px;height:1px;background:#a0a0a0"></div>
<div class="a" style="left:1178px;top:364px;width:10px;height:10px;border:1px solid #a0a0a0"></div>
<div class="a" style="left:796px;top:386px;width:424px;height:20px;background:#f0f0f0"></div>
<div class="a" style="left:803px;top:388px;width:0;height:14px;"><div class="t" style="left:0;top:0;font-size:12px;color:#000;transform:scaleX(0.97);transform-origin:0 50%;">File</div></div>
<div class="a" style="left:835px;top:388px;width:0;height:14px;"><div class="t" style="left:0;top:0;font-size:12px;color:#000;transform:scaleX(0.97);transform-origin:0 50%;">Edit</div></div>
<div class="a" style="left:868px;top:388px;width:0;height:14px;"><div class="t" style="left:0;top:0;font-size:12px;color:#000;transform:scaleX(0.97);transform-origin:0 50%;">View</div></div>
<div class="a" style="left:907px;top:388px;width:0;height:14px;"><div class="t" style="left:0;top:0;font-size:12px;color:#000;transform:scaleX(0.97);transform-origin:0 50%;">Project</div></div>
<div class="a" style="left:959px;top:388px;width:0;height:14px;"><div class="t" style="left:0;top:0;font-size:12px;color:#000;transform:scaleX(0.97);transform-origin:0 50%;">Operate</div></div>
<div class="a" style="left:1017px;top:388px;width:0;height:14px;"><div class="t" style="left:0;top:0;font-size:12px;color:#000;transform:scaleX(0.97);transform-origin:0 50%;">Tools</div></div>
<div class="a" style="left:1058px;top:388px;width:0;height:14px;"><div class="t" style="left:0;top:0;font-size:12px;color:#000;transform:scaleX(0.97);transform-origin:0 50%;">Window</div></div>
<div class="a" style="left:1115px;top:388px;width:0;height:14px;"><div class="t" style="left:0;top:0;font-size:12px;color:#000;transform:scaleX(0.97);transform-origin:0 50%;">Help</div></div>
<div class="a" style="left:796px;top:406px;width:424px;height:1px;background:#a0a0a0"></div>
<div class="a" style="left:796px;top:407px;width:424px;height:24px;background:#f0f0f0"></div>
<div class="a" style="left:796px;top:430px;width:424px;height:2px;background:#a0a0a0"></div>
<svg style="left:850px;top:413px" width="84" height="15" viewBox="0 0 84 15"><g shape-rendering="crispEdges" fill="#000"><rect x="0" y="5" width="1" height="4"/><rect x="2" y="5" width="1" height="4"/><rect x="4" y="0" width="1" height="4"/><rect x="6" y="0" width="1" height="4"/><rect x="4" y="10" width="1" height="4"/><rect x="6" y="10" width="1" height="4"/><rect x="4" y="4" width="5" height="6"/></g><path d="M8 0 L16 7 L8 14 Z" fill="#000"/><g transform="translate(17,-3)" stroke="#000" stroke-width="1" fill="#fff" stroke-linejoin="miter"><path d="M7.5 3 H15.5 Q17.5 3 17.5 5.5 V8 H19.5 L15.5 12 L11.5 8 H14 V6.5 H11 Z"/><path d="M16 15.5 H8.5 Q6.5 15.5 6.5 13 V10.5 H4.5 L8.5 6.5 L12.5 10.5 H10 V12.5 H13 Z"/><path d="M7.5 3 L16 15.5" fill="none" stroke-width="1.1"/></g><g transform="translate(47,0)"><path d="M4.5 0 H10.5 L15 4.5 V10.5 L10.5 15 H4.5 L0 10.5 V4.5 Z" fill="#000"/><path d="M5 1.2 H10 L13.8 5 V10 L10 13.8 H5 L1.2 10 V5 Z" fill="#fff"/><circle cx="7.5" cy="7.5" r="5.3" fill="#b82525"/><ellipse cx="7.5" cy="5.3" rx="4" ry="2.4" fill="#d86060"/><rect x="2.3" y="7" width="10.4" height="1.3" fill="#c23232"/></g><g shape-rendering="crispEdges" fill="#000"><rect x="71" y="1" width="3" height="10"/><rect x="77" y="1" width="3" height="10"/></g></svg>
<svg style="left:1198px;top:411px" width="13" height="16" viewBox="0 0 13 16"><path d="M2 5 Q2 1 6.5 1 Q11 1 11 4.5 Q11 7 8 8.5 L7.5 10.5 H4.8 L5 7.5 Q8 6.2 8 4.6 Q8 3.3 6.5 3.3 Q5 3.3 5 5 Z" fill="#ffff00" stroke="#000" stroke-width="0.9"/><rect x="4.6" y="11.8" width="3.2" height="3" fill="#ffff00" stroke="#000" stroke-width="0.9"/></svg>
<div class="a" style="left:1217px;top:386px;width:1px;height:45px;background:#606060"></div>
<div class="a" style="left:1218px;top:398px;width:2px;height:30px;background:#000"></div>
<div class="a" style="left:862px;top:447px;width:53px;height:24px;background:#b9b9b9;border-radius:3px 3px 0 0;border-top:2px solid #d0d0d0"></div>
<div class="a" style="left:911px;top:449px;width:4px;height:22px;background:linear-gradient(90deg,#b0b0b0,#909090)"></div>
<div class="a" style="left:872px;top:452px;width:0;height:14px;"><div class="t" style="left:0;top:0;font-size:12px;color:#000;transform:scaleX(0.97);transform-origin:0 50%;">Stored</div></div>
<div class="a" style="left:813px;top:470px;width:396px;height:300px;background:#b8b8b8"></div>
<div class="a" style="left:813px;top:470px;width:396px;height:3px;background:linear-gradient(#d0d0d0,#bcbcbc)"></div>
<div class="a" style="left:813px;top:470px;width:3px;height:300px;background:linear-gradient(90deg,#cacaca,#bcbcbc)"></div>
<div class="a" style="left:1205px;top:470px;width:4px;height:300px;background:linear-gradient(90deg,#b0b0b0,#8e8e8e)"></div>
<div class="a" style="left:813px;top:766px;width:396px;height:4px;background:linear-gradient(#b0b0b0,#8e8e8e)"></div>
<div class="a" style="left:813px;top:445px;width:50px;height:28px;background:#b8b8b8;border-radius:3px 3px 0 0;border-top:2px solid #d4d4d4"></div>
<div class="a" style="left:813px;top:447px;width:3px;height:26px;background:linear-gradient(90deg,#cacaca,#bcbcbc)"></div>
<div class="a" style="left:859px;top:447px;width:4px;height:26px;background:linear-gradient(90deg,#b0b0b0,#8e8e8e)"></div>
<div class="a" style="left:823px;top:450px;width:0;height:14px;"><div class="t" style="left:0;top:0;font-size:12px;color:#000;transform:scaleX(0.97);transform-origin:0 50%;">Main</div></div>
<svg style="left:831px;top:491px" width="54" height="30" viewBox="0 0 54 30"><defs><linearGradient id="bg" x1="0" y1="0" x2="0" y2="1"><stop offset="0" stop-color="#f0f0f0"/><stop offset="0.6" stop-color="#d8d8d8"/><stop offset="1" stop-color="#bcbcbc"/></linearGradient></defs><ellipse cx="28" cy="17.5" rx="23" ry="11" fill="#a4a4a4" opacity="0.8"/><ellipse cx="26" cy="14" rx="22.8" ry="10.8" fill="url(#bg)" stroke="#303030" stroke-width="1"/><path d="M37 9 L49 14 L37 19.5 Z" fill="#2b6a1e"/></svg>
<svg style="left:831px;top:521px" width="54" height="30" viewBox="0 0 54 30"><defs><linearGradient id="bg" x1="0" y1="0" x2="0" y2="1"><stop offset="0" stop-color="#f0f0f0"/><stop offset="0.6" stop-color="#d8d8d8"/><stop offset="1" stop-color="#bcbcbc"/></linearGradient></defs><ellipse cx="28" cy="17.5" rx="23" ry="11" fill="#a4a4a4" opacity="0.8"/><ellipse cx="26" cy="14" rx="22.8" ry="10.8" fill="url(#bg)" stroke="#303030" stroke-width="1"/><path d="M37 9 L49 14 L37 19.5 Z" fill="#2b6a1e"/></svg>
<div class="a" style="left:888px;top:499px;width:0;height:14px;"><div class="t" style="left:0;top:0;font-size:12px;color:#000;transform:scaleX(0.97);transform-origin:0 50%;">Feedback</div></div>
<div class="a" style="left:888px;top:529px;width:0;height:14px;"><div class="t" style="left:0;top:0;font-size:12px;color:#000;transform:scaleX(0.97);transform-origin:0 50%;">Enable e-source</div></div>
<div class="a" style="left:834px;top:554px;width:60px;height:25px;background:#aaaaaa"></div>
<div class="a" style="left:834px;top:554px;width:60px;height:3px;background:linear-gradient(#9a9a9a,#a8a8a8)"></div>
<div class="a" style="left:891px;top:554px;width:3px;height:25px;background:#c0c0c0"></div>
<div class="a" style="left:834px;top:576px;width:60px;height:3px;background:#c6c6c6"></div>
<div class="a" style="left:834px;top:554px;width:3px;height:25px;background:#a0a0a0"></div>
<div class="a" style="left:838px;top:558px;width:52px;height:17px;background:#fafafa"></div>
<div class="a" style="left:840px;top:560.5px;width:0;height:14px;"><div class="t" style="left:0;top:0;font-size:12px;color:#000;transform:scaleX(0.97);transform-origin:0 50%;">0</div></div>
<div class="a" style="left:834px;top:583px;width:60px;height:25px;background:#aaaaaa"></div>
<div class="a" style="left:834px;top:583px;width:60px;height:3px;background:linear-gradient(#9a9a9a,#a8a8a8)"></div>
<div class="a" style="left:891px;top:583px;width:3px;height:25px;background:#c0c0c0"></div>
<div class="a" style="left:834px;top:605px;width:60px;height:3px;background:#c6c6c6"></div>
<div class="a" style="left:834px;top:583px;width:3px;height:25px;background:#a0a0a0"></div>
<div class="a" style="left:838px;top:587px;width:52px;height:17px;background:#fafafa"></div>
<div class="a" style="left:840px;top:589.5px;width:0;height:14px;"><div class="t" style="left:0;top:0;font-size:12px;color:#000;transform:scaleX(0.97);transform-origin:0 50%;">0.000</div></div>
<div class="a" style="left:834px;top:613px;width:60px;height:25px;background:#aaaaaa"></div>
<div class="a" style="left:834px;top:613px;width:60px;height:3px;background:linear-gradient(#9a9a9a,#a8a8a8)"></div>
<div class="a" style="left:891px;top:613px;width:3px;height:25px;background:#c0c0c0"></div>
<div class="a" style="left:834px;top:635px;width:60px;height:3px;background:#c6c6c6"></div>
<div class="a" style="left:834px;top:613px;width:3px;height:25px;background:#a0a0a0"></div>
<div class="a" style="left:838px;top:617px;width:52px;height:17px;background:#fafafa"></div>
<div class="a" style="left:840px;top:619.5px;width:0;height:14px;"><div class="t" style="left:0;top:0;font-size:12px;color:#000;transform:scaleX(0.97);transform-origin:0 50%;">8.180</div></div>
<div class="a" style="left:895px;top:557px;width:0;height:14px;"><div class="t" style="left:0;top:0;font-size:12px;color:#000;transform:scaleX(0.97);transform-origin:0 50%;">Burn time (s)</div></div>
<div class="a" style="left:895px;top:585px;width:0;height:14px;"><div class="t" style="left:0;top:0;font-size:12px;color:#000;transform:scaleX(0.97);transform-origin:0 50%;">Target current (A)</div></div>
<div class="a" style="left:895px;top:615px;width:0;height:14px;"><div class="t" style="left:0;top:0;font-size:12px;color:#000;transform:scaleX(0.97);transform-origin:0 50%;">Max Voltage (V)</div></div>
<div class="a" style="left:1010px;top:494px;width:63px;height:20px;background:linear-gradient(#dcdcdc,#c4c4c4 60%,#b4b4b4);border:1px solid #404040;box-shadow:inset -2px -2px 0 #9a9a9a,inset 2px 2px 0 #ececec"></div>
<div class="a" style="left:1041.5px;top:498.0px;width:0;height:14px;"><div class="t" style="left:0;top:0;font-size:12px;color:#ff0000;transform:translateX(-50%) scaleX(0.97);transform-origin:50% 50%;">ABORT</div></div>
<div class="a" style="left:1089px;top:494px;width:99px;height:20px;background:linear-gradient(#dcdcdc,#c4c4c4 60%,#b4b4b4);border:1px solid #404040;box-shadow:inset -2px -2px 0 #9a9a9a,inset 2px 2px 0 #ececec"></div>
<div class="a" style="left:1138.5px;top:498.0px;width:0;height:14px;"><div class="t" style="left:0;top:0;font-size:12px;color:#ff0000;transform:translateX(-50%) scaleX(0.97);transform-origin:50% 50%;">Stop Eventually</div></div>
<div class="a" style="left:1128px;top:545px;width:0;height:14px;"><div class="t" style="right:0;top:0;font-size:20px;color:#000;transform:scaleX(0.97);transform-origin:100% 50%;font-weight:bold;">Time (s)</div></div>
<div class="a" style="left:1133px;top:532px;width:60px;height:39px;background:#aaaaaa"></div>
<div class="a" style="left:1133px;top:532px;width:60px;height:3px;background:linear-gradient(#9a9a9a,#a8a8a8)"></div>
<div class="a" style="left:1190px;top:532px;width:3px;height:39px;background:#c0c0c0"></div>
<div class="a" style="left:1133px;top:568px;width:60px;height:3px;background:#c6c6c6"></div>
<div class="a" style="left:1133px;top:532px;width:3px;height:39px;background:#a0a0a0"></div>
<div class="a" style="left:1137px;top:536px;width:52px;height:31px;background:#d2d2d2"></div>
<div class="a" style="left:1141px;top:545.5px;width:0;height:14px;"><div class="t" style="left:0;top:0;font-size:20px;color:#000;transform:scaleX(0.97);transform-origin:0 50%;font-weight:bold;">30</div></div>
<div class="a" style="left:1129px;top:585px;width:0;height:14px;"><div class="t" style="right:0;top:0;font-size:12px;color:#000;transform:scaleX(0.97);transform-origin:100% 50%;">Measured Current (A)</div></div>
<div class="a" style="left:1134px;top:582px;width:59px;height:24px;background:#aaaaaa"></div>
<div class="a" style="left:1134px;top:582px;width:59px;height:3px;background:linear-gradient(#9a9a9a,#a8a8a8)"></div>
<div class="a" style="left:1190px;top:582px;width:3px;height:24px;background:#c0c0c0"></div>
<div class="a" style="left:1134px;top:603px;width:59px;height:3px;background:#c6c6c6"></div>
<div class="a" style="left:1134px;top:582px;width:3px;height:24px;background:#a0a0a0"></div>
<div class="a" style="left:1138px;top:586px;width:51px;height:16px;background:#d2d2d2"></div>
<div class="a" style="left:1139px;top:588.0px;width:0;height:14px;"><div class="t" style="left:0;top:0;font-size:12px;color:#000;transform:scaleX(0.97);transform-origin:0 50%;">57.21m</div></div>
<div class="a" style="left:1129px;top:617px;width:0;height:14px;"><div class="t" style="right:0;top:0;font-size:12px;color:#000;transform:scaleX(0.97);transform-origin:100% 50%;">Measured Voltage (V)</div></div>
<div class="a" style="left:1134px;top:613px;width:59px;height:24px;background:#aaaaaa"></div>
<div class="a" style="left:1134px;top:613px;width:59px;height:3px;background:linear-gradient(#9a9a9a,#a8a8a8)"></div>
<div class="a" style="left:1190px;top:613px;width:3px;height:24px;background:#c0c0c0"></div>
<div class="a" style="left:1134px;top:634px;width:59px;height:3px;background:#c6c6c6"></div>
<div class="a" style="left:1134px;top:613px;width:3px;height:24px;background:#a0a0a0"></div>
<div class="a" style="left:1138px;top:617px;width:51px;height:16px;background:#d2d2d2"></div>
<div class="a" style="left:1139px;top:619.0px;width:0;height:14px;"><div class="t" style="left:0;top:0;font-size:12px;color:#000;transform:scaleX(0.97);transform-origin:0 50%;">1.011</div></div>
<div class="a" style="left:850px;top:645px;width:0;height:14px;"><div class="t" style="left:0;top:0;font-size:12px;color:#000;transform:scaleX(0.97);transform-origin:0 50%;">Volts vs. seconds</div></div>
<div class="a" style="left:842px;top:662px;width:327px;height:96px;background:#c2c2c2"></div>
<div class="a" style="left:842px;top:662px;width:327px;height:2px;background:#d6d6d6"></div>
<div class="a" style="left:842px;top:664px;width:9px;height:94px;background:linear-gradient(90deg,#d2d2d2,#c6c6c6)"></div>
<div class="a" style="left:1146px;top:664px;width:23px;height:94px;background:linear-gradient(90deg,#c2c2c2,#b8b8b8 60%,#9a9a9a)"></div>
<div class="a" style="left:842px;top:756px;width:327px;height:2px;background:#a8a8a8"></div>
<svg style="left:883px;top:672px" width="263" height="60" viewBox="0 0 263 60">
<rect width="263" height="60" fill="#000"/>
<g shape-rendering="crispEdges">
<path d="M7 0h1v60h-1zM15 0h1v60h-1zM22 0h1v60h-1zM30 0h1v60h-1zM45 0h1v60h-1zM52 0h1v60h-1zM60 0h1v60h-1zM67 0h1v60h-1zM82 0h1v60h-1zM90 0h1v60h-1zM97 0h1v60h-1zM105 0h1v60h-1zM120 0h1v60h-1zM127 0h1v60h-1zM135 0h1v60h-1zM142 0h1v60h-1zM157 0h1v60h-1zM165 0h1v60h-1zM172 0h1v60h-1zM180 0h1v60h-1zM195 0h1v60h-1zM202 0h1v60h-1zM210 0h1v60h-1zM217 0h1v60h-1zM232 0h1v60h-1zM240 0h1v60h-1zM247 0h1v60h-1zM255 0h1v60h-1zM0 13h263v1h-263zM0 19h263v1h-263zM0 25h263v1h-263zM0 31h263v1h-263zM0 43h263v1h-263zM0 49h263v1h-263zM0 55h263v1h-263z" fill="#003c00"/>
<path d="M37 0h1v60h-1zM75 0h1v60h-1zM112 0h1v60h-1zM150 0h1v60h-1zM187 0h1v60h-1zM225 0h1v60h-1zM0 6h263v1h-263zM0 35h263v1h-263z" fill="#007400"/>
</g>
<polyline points="31.0,60.0 42.0,49.0 53.0,39.5 64.0,31.5 74.0,25.6 87.0,22.5 102.0,20.5 117.0,19.5 132.0,18.5 143.0,17.0 148.0,21.0 162.0,20.3 183.0,20.5 197.0,22.0 212.0,24.0 226.0,26.0 228.0,33.0 230.6,42.6 232.5,50.0 233.8,56.3 234.4,60.0" fill="none" stroke="#fff" stroke-width="1.5"/><path d="M28.5 60.0h5M31.0 57.5v5M30.4 58.1h5M32.9 55.6v5M32.3 56.2h5M34.8 53.7v5M34.1 54.4h5M36.6 51.9v5M36.0 52.5h5M38.5 50.0v5M37.9 50.6h5M40.4 48.1v5M39.8 48.8h5M42.3 46.3v5M41.7 47.1h5M44.2 44.6v5M43.5 45.5h5M46.0 43.0v5M45.4 43.9h5M47.9 41.4v5M47.3 42.3h5M49.8 39.8v5M49.2 40.6h5M51.7 38.1v5M51.1 39.1h5M53.6 36.6v5M52.9 37.7h5M55.4 35.2v5M54.8 36.4h5M57.3 33.9v5M56.7 35.0h5M59.2 32.5v5M58.6 33.6h5M61.1 31.1v5M60.5 32.3h5M63.0 29.8v5M62.3 31.0h5M64.8 28.5v5M64.2 29.9h5M66.7 27.4v5M66.1 28.8h5M68.6 26.3v5M68.0 27.7h5M70.5 25.2v5M69.9 26.6h5M72.4 24.1v5M71.7 25.5h5M74.2 23.0v5M73.6 25.1h5M76.1 22.6v5M75.5 24.6h5M78.0 22.1v5M77.4 24.2h5M79.9 21.7v5M79.3 23.7h5M81.8 21.2v5M81.1 23.3h5M83.6 20.8v5M83.0 22.9h5M85.5 20.4v5M84.9 22.4h5M87.4 19.9v5M86.8 22.2h5M89.3 19.7v5M88.7 21.9h5M91.2 19.4v5M90.5 21.7h5M93.0 19.2v5M92.4 21.4h5M94.9 18.9v5M94.3 21.2h5M96.8 18.7v5M96.2 20.9h5M98.7 18.4v5M98.1 20.7h5M100.6 18.2v5M99.9 20.5h5M102.4 18.0v5M101.8 20.3h5M104.3 17.8v5M103.7 20.2h5M106.2 17.7v5M105.6 20.1h5M108.1 17.6v5M107.5 20.0h5M110.0 17.5v5M109.3 19.8h5M111.8 17.3v5M111.2 19.7h5M113.7 17.2v5M113.1 19.6h5M115.6 17.1v5M115.0 19.5h5M117.5 17.0v5M116.9 19.3h5M119.4 16.8v5M118.7 19.2h5M121.2 16.7v5M120.6 19.1h5M123.1 16.6v5M122.5 19.0h5M125.0 16.5v5M124.4 18.8h5M126.9 16.3v5M126.3 18.7h5M128.8 16.2v5M128.1 18.6h5M130.6 16.1v5M130.0 18.4h5M132.5 15.9v5M131.9 18.2h5M134.4 15.7v5M133.8 17.9h5M136.3 15.4v5M135.7 17.7h5M138.2 15.2v5M137.5 17.4h5M140.0 14.9v5M139.4 17.1h5M141.9 14.6v5M141.3 17.6h5M143.8 15.1v5M143.2 19.1h5M145.7 16.6v5M145.1 20.6h5M147.6 18.1v5M146.9 20.9h5M149.4 18.4v5M148.8 20.8h5M151.3 18.3v5M150.7 20.7h5M153.2 18.2v5M152.6 20.6h5M155.1 18.1v5M154.5 20.6h5M157.0 18.1v5M156.3 20.5h5M158.8 18.0v5M158.2 20.4h5M160.7 17.9v5M160.1 20.3h5M162.6 17.8v5M162.0 20.3h5M164.5 17.8v5M163.9 20.3h5M166.4 17.8v5M165.7 20.4h5M168.2 17.9v5M167.6 20.4h5M170.1 17.9v5M169.5 20.4h5M172.0 17.9v5M171.4 20.4h5M173.9 17.9v5M173.3 20.4h5M175.8 17.9v5M175.1 20.4h5M177.6 17.9v5M177.0 20.5h5M179.5 18.0v5M178.9 20.5h5M181.4 18.0v5M180.8 20.5h5M183.3 18.0v5M182.7 20.7h5M185.2 18.2v5M184.5 20.9h5M187.0 18.4v5M186.4 21.1h5M188.9 18.6v5M188.3 21.3h5M190.8 18.8v5M190.2 21.5h5M192.7 19.0v5M192.1 21.7h5M194.6 19.2v5M193.9 21.9h5M196.4 19.4v5M195.8 22.2h5M198.3 19.7v5M197.7 22.4h5M200.2 19.9v5M199.6 22.7h5M202.1 20.2v5M201.5 22.9h5M204.0 20.4v5M203.3 23.2h5M205.8 20.7v5M205.2 23.4h5M207.7 20.9v5M207.1 23.7h5M209.6 21.2v5M209.0 23.9h5M211.5 21.4v5M210.9 24.2h5M213.4 21.7v5M212.7 24.5h5M215.2 22.0v5M214.6 24.7h5M217.1 22.2v5M216.5 25.0h5M219.0 22.5v5M218.4 25.3h5M220.9 22.8v5M220.3 25.5h5M222.8 23.0v5M222.1 25.8h5M224.6 23.3v5M223.5 26.0h5M226.0 23.5v5M225.5 33.0h5M228.0 30.5v5M228.1 42.6h5M230.6 40.1v5M230.0 50.0h5M232.5 47.5v5M231.3 56.3h5M233.8 53.8v5" stroke="#fff" stroke-width="1.3"/>
</svg>
<div class="a" style="left:882px;top:671px;width:264px;height:1px;background:#555"></div>
<div class="a" style="left:882px;top:671px;width:1px;height:62px;background:#555"></div>
<div class="a" style="left:882px;top:732px;width:264px;height:1px;background:#c8c8c8"></div>
<div class="a" style="left:875px;top:665.3px;width:0;height:14px;"><div class="t" style="right:0;top:0;font-size:12px;color:#000;transform:scaleX(0.93);transform-origin:100% 50%;">8</div></div>
<div class="a" style="left:876px;top:672px;width:5px;height:1px;background:#000"></div>
<div class="a" style="left:875px;top:700.1px;width:0;height:14px;"><div class="t" style="right:0;top:0;font-size:12px;color:#000;transform:scaleX(0.93);transform-origin:100% 50%;">5</div></div>
<div class="a" style="left:876px;top:707px;width:5px;height:1px;background:#000"></div>
<div class="a" style="left:875px;top:724.5px;width:0;height:14px;"><div class="t" style="right:0;top:0;font-size:12px;color:#000;transform:scaleX(0.93);transform-origin:100% 50%;">3</div></div>
<div class="a" style="left:876px;top:732px;width:5px;height:1px;background:#000"></div>
<div class="a" style="left:876px;top:678px;width:5px;height:1px;background:#000"></div>
<div class="a" style="left:883.0px;top:739px;width:0;height:14px;"><div class="t" style="left:0;top:0;font-size:12px;color:#000;transform:translateX(-50%) scaleX(0.93);transform-origin:50% 50%;">0</div></div>
<div class="a" style="left:883px;top:734px;width:1px;height:5px;background:#000"></div>
<div class="a" style="left:920.4285714285714px;top:739px;width:0;height:14px;"><div class="t" style="left:0;top:0;font-size:12px;color:#000;transform:translateX(-50%) scaleX(0.93);transform-origin:50% 50%;">5</div></div>
<div class="a" style="left:920px;top:734px;width:1px;height:5px;background:#000"></div>
<div class="a" style="left:957.8571428571429px;top:739px;width:0;height:14px;"><div class="t" style="left:0;top:0;font-size:12px;color:#000;transform:translateX(-50%) scaleX(0.93);transform-origin:50% 50%;">10</div></div>
<div class="a" style="left:958px;top:734px;width:1px;height:5px;background:#000"></div>
<div class="a" style="left:995.2857142857143px;top:739px;width:0;height:14px;"><div class="t" style="left:0;top:0;font-size:12px;color:#000;transform:translateX(-50%) scaleX(0.93);transform-origin:50% 50%;">15</div></div>
<div class="a" style="left:995px;top:734px;width:1px;height:5px;background:#000"></div>
<div class="a" style="left:1032.7142857142858px;top:739px;width:0;height:14px;"><div class="t" style="left:0;top:0;font-size:12px;color:#000;transform:translateX(-50%) scaleX(0.93);transform-origin:50% 50%;">20</div></div>
<div class="a" style="left:1033px;top:734px;width:1px;height:5px;background:#000"></div>
<div class="a" style="left:1070.142857142857px;top:739px;width:0;height:14px;"><div class="t" style="left:0;top:0;font-size:12px;color:#000;transform:translateX(-50%) scaleX(0.93);transform-origin:50% 50%;">25</div></div>
<div class="a" style="left:1070px;top:734px;width:1px;height:5px;background:#000"></div>
<div class="a" style="left:1107.5714285714287px;top:739px;width:0;height:14px;"><div class="t" style="left:0;top:0;font-size:12px;color:#000;transform:translateX(-50%) scaleX(0.93);transform-origin:50% 50%;">30</div></div>
<div class="a" style="left:1108px;top:734px;width:1px;height:5px;background:#000"></div>
<div class="a" style="left:1145.0px;top:739px;width:0;height:14px;"><div class="t" style="left:0;top:0;font-size:12px;color:#000;transform:translateX(-50%) scaleX(0.93);transform-origin:50% 50%;">35</div></div>
<div class="a" style="left:1145px;top:734px;width:1px;height:5px;background:#000"></div>
</body></html>
